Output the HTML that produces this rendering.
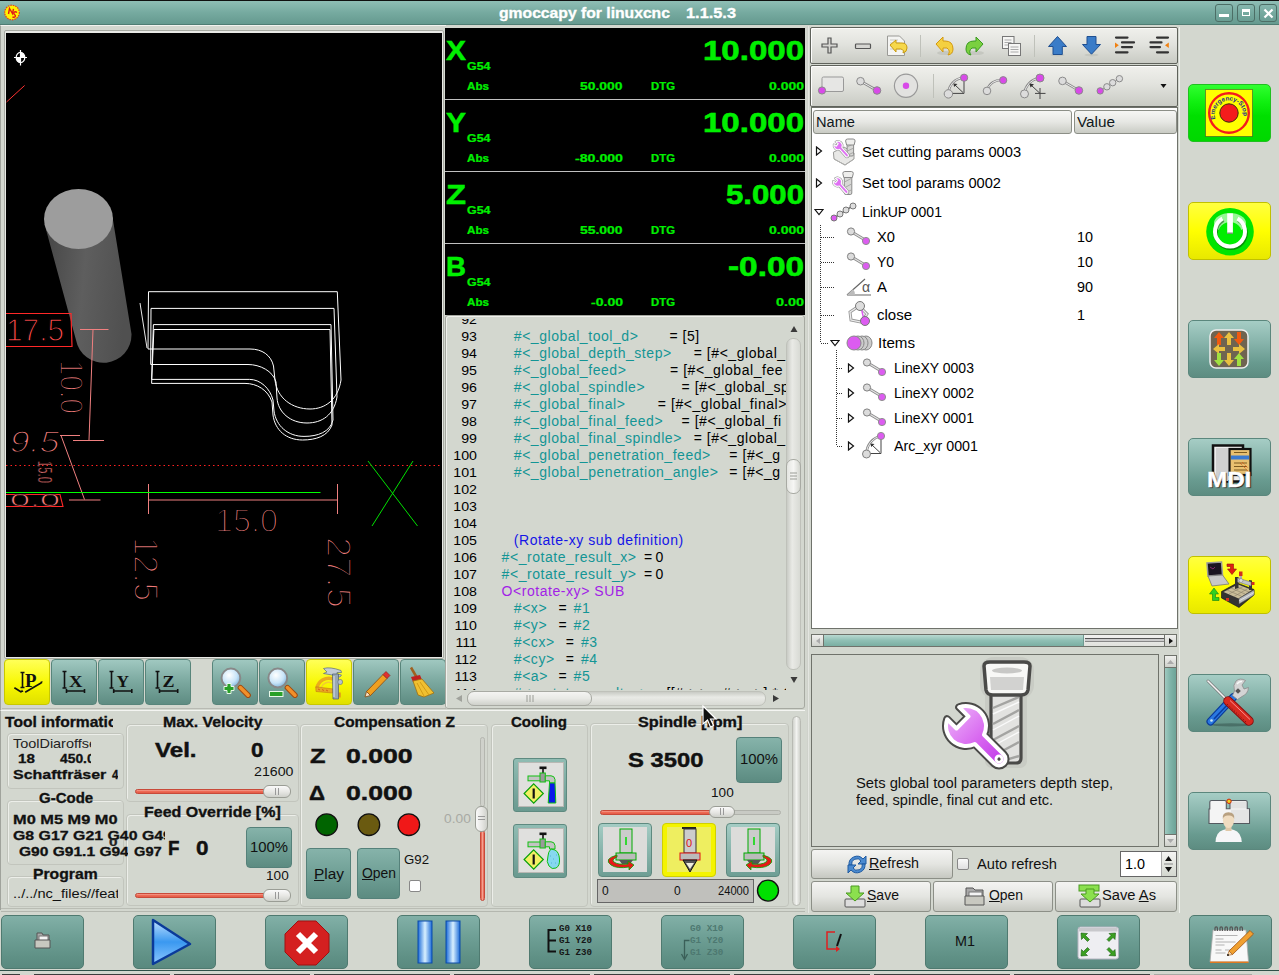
<!DOCTYPE html>
<html><head><meta charset="utf-8"><style>*{box-sizing:border-box;margin:0;padding:0}
html,body{width:1279px;height:975px;overflow:hidden;background:#d3d7cf;font-family:"Liberation Sans",sans-serif;color:#000;position:relative}
.a{position:absolute}
.t{position:absolute;white-space:pre;line-height:1;transform-origin:0 0}
</style></head><body>
<div class="a" style="left:0px;top:0px;width:1279px;height:1px;background:#101010"></div>
<div class="a" style="left:0px;top:1px;width:1279px;height:24px;background:linear-gradient(#8fbeb5,#76aaa0 50%,#659a8f);border-bottom:1px solid #4f7d73"></div>
<div class="t" id="t0" style="left:499.0px;top:6.1px;font-size:14px;font-weight:700;color:#fff;transform:scaleX(1.121);-webkit-text-stroke:0.31px #fff;">gmoccapy for linuxcnc</div>
<div class="t" id="t1" style="left:686.0px;top:6.1px;font-size:14px;font-weight:700;color:#fff;transform:scaleX(1.167);-webkit-text-stroke:0.31px #fff;">1.1.5.3</div>
<svg class="a" style="left:4px;top:4px;" width="17" height="17" viewBox="0 0 17 17"><circle cx="8" cy="8.5" r="7.3" fill="#fff200" stroke="#e8401a" stroke-width="1.2" stroke-dasharray="1.5 1"/><path d="M4.5,10 L5.5,4.5 L8.5,9.5 L9.5,4.8" stroke="#e01818" stroke-width="1.4" fill="none"/><path d="M13,8.5 C11,7 8.5,8.5 10.5,10.5 C12.5,12 11,14 8.5,13" stroke="#e01818" stroke-width="1.4" fill="none"/></svg>
<div class="a" style="left:1215px;top:4px;width:18px;height:18px;border:1px solid #4c6e66;border-radius:3px;"></div>
<div class="a" style="left:1237px;top:4px;width:18px;height:18px;border:1px solid #4c6e66;border-radius:3px;"></div>
<div class="a" style="left:1259px;top:4px;width:18px;height:18px;border:1px solid #4c6e66;border-radius:3px;"></div>
<div class="a" style="left:1219px;top:14px;width:10px;height:3px;background:#fff"></div>
<div class="a" style="left:1242px;top:9px;width:8px;height:7px;border:1px solid #fff;border-top:3px solid #fff"></div>
<svg class="a" style="left:1263px;top:8px;" width="11" height="11" viewBox="0 0 11 11"><path d="M1.5,1.5 L9.5,9.5 M9.5,1.5 L1.5,9.5" stroke="#fff" stroke-width="2.2"/></svg>
<div class="a" style="left:0px;top:25px;width:446px;height:685px;border-left:1px solid #a0a39c;border-top:1px solid #f2f3ef"></div>
<div class="a" style="left:4px;top:30px;width:440px;height:629px;border:1px solid #a8aba3;border-radius:2px;background:#e8e9e5"></div>
<div class="a" style="left:6px;top:33px;width:436px;height:624px;background:#000"></div>
<svg class="a" style="left:0px;top:0px;clip-path:inset(33px 0 0 6px)" width="442" height="657" viewBox="0 0 442 657">
<g fill="none" stroke-width="1">
<path d="M6.5,102 L24.6,85.5" stroke="#ff3030"/>
<ellipse cx="20.5" cy="57.5" rx="4.3" ry="5.2" stroke="#fff" stroke-width="1.2"/>
<path d="M14,57.5 H27 M20.5,50 V65.5" stroke="#fff" stroke-width="1.2"/>
<path d="M20.5,57.5 V52.3 A4.3,5.2 0 0 1 24.8,57.5 Z" fill="#fff" stroke="none"/>
<path d="M20.5,57.5 V62.7 A4.3,5.2 0 0 1 16.2,57.5 Z" fill="#fff" stroke="none"/>
</g>
<defs><linearGradient id="cyl" x1="0" y1="0" x2="1" y2="0.15"><stop offset="0" stop-color="#454545"/><stop offset="0.5" stop-color="#5e5e5e"/><stop offset="1" stop-color="#505050"/></linearGradient></defs>
<path d="M44.5,224 L76,340 A28,28 0 0 0 131.5,334 L112.5,217 Z" fill="url(#cyl)"/>
<ellipse cx="78.5" cy="219" rx="34.5" ry="30" fill="#9d9d9d"/>
<g fill="none" stroke="#ffffff" stroke-width="1">
<path d="M148.5,291.7 L337.3,291.7 L341,380 C338,400 325,409 310,409 C292,409 277,398 275,380 L273.5,366 C271,355 262,349 250,349 L148,349 Z"/>
<path d="M151,308.4 L334,308.4 L337,397 C334,415 322,423 307,423 C290,423 278,412 277,398 L276,382 C273,371 260,364.5 248,364.5 L150.7,364.5 Z"/>
<path d="M153.4,324.6 L331,324.6 L333,420 C330,432 318,436.4 304,436.4 C288,436.4 276,426 274,411 L273,400 C270,388 260,379.4 249.6,379.4 L151.6,379.4 Z"/>
<path d="M153.9,329.5 L330,329.5 L332,425 C328,436 316,440 302.6,440 C286,440 275,430 273,415 L272,402 C268,390 257,383.4 245,383.4 L151.6,383.4 Z"/>
</g>
<path d="M140,303 L147,348" stroke="#e8e8e8" stroke-width="1"/>
<g fill="none" stroke="#f08080" stroke-width="1">
<path d="M93,329.5 L89,440 M80,329.5 H108.5 M73,440.5 H104 M60,435.5 H80 M61,435.5 L84.5,499.5 M69,500 H100.5"/>
<path d="M148.5,484 V514 M337.5,484 V514 M148.5,500 H337.5"/>
</g>
<path d="M6,465.5 H442" stroke="#ff2020" stroke-width="1" stroke-dasharray="1.5 3"/>
<path d="M6,492.5 H320.5" stroke="#00ff00" stroke-width="1"/>
<path d="M368,461 L417.5,526 M413,461 L372,526" stroke="#00e000" stroke-width="1"/>
<path d="M6,313.5 H71 L72,346.5 H6" fill="none" stroke="#ff2828" stroke-width="1.2"/>
<path d="M6,494.5 H60 L63,506.5 H6" fill="none" stroke="#ff2828" stroke-width="1.1"/>
<g font-family="Liberation Sans" fill="#ff4a4a" stroke="#000" stroke-width="1.3" paint-order="normal">
<text x="6" y="341" font-size="31" textLength="58" lengthAdjust="spacingAndGlyphs">17.5</text>
</g>
<g font-family="Liberation Sans" fill="#f07a78" stroke="#000" stroke-width="1.9">
<text transform="translate(6,452) skewX(-12)" x="2" y="0" font-size="30" stroke-width="1.5" textLength="50" lengthAdjust="spacingAndGlyphs">9.5</text>
<text x="215" y="531.5" font-size="33" textLength="63" lengthAdjust="spacingAndGlyphs">15.0</text>
<text transform="translate(59.5,360) rotate(90)" x="0" y="0" font-size="34" textLength="54" lengthAdjust="spacingAndGlyphs">10.0</text>
<text transform="translate(134,537) rotate(90)" x="0" y="0" font-size="35" textLength="64" lengthAdjust="spacingAndGlyphs">12.5</text>
<text transform="translate(327,537) rotate(90)" x="0" y="0" font-size="35" textLength="71" lengthAdjust="spacingAndGlyphs">27.5</text>
<text transform="translate(38,461) rotate(90)" x="0" y="0" font-size="20" stroke-width="0.6" textLength="22" lengthAdjust="spacingAndGlyphs">15.0</text>
<text x="10" y="506" font-size="16" stroke-width="0.5" textLength="50" lengthAdjust="spacingAndGlyphs">0.0</text>
</g>
</svg>
<div class="a" style="left:4px;top:659px;width:46px;height:46px;background:linear-gradient(#ffff58,#f8f800 55%,#e0e000);border:1px solid #c8c800;border-radius:4px;"></div>
<div class="a" style="left:51px;top:659px;width:46px;height:46px;background:linear-gradient(#a0c8c0,#7eaba2 45%,#5e8c82);border:1px solid #58857b;border-radius:4px;"></div>
<div class="a" style="left:98px;top:659px;width:46px;height:46px;background:linear-gradient(#a0c8c0,#7eaba2 45%,#5e8c82);border:1px solid #58857b;border-radius:4px;"></div>
<div class="a" style="left:145px;top:659px;width:46px;height:46px;background:linear-gradient(#a0c8c0,#7eaba2 45%,#5e8c82);border:1px solid #58857b;border-radius:4px;"></div>
<div class="a" style="left:212px;top:659px;width:46px;height:46px;background:linear-gradient(#a0c8c0,#7eaba2 45%,#5e8c82);border:1px solid #58857b;border-radius:4px;"></div>
<div class="a" style="left:259px;top:659px;width:46px;height:46px;background:linear-gradient(#a0c8c0,#7eaba2 45%,#5e8c82);border:1px solid #58857b;border-radius:4px;"></div>
<div class="a" style="left:306px;top:659px;width:46px;height:46px;background:linear-gradient(#ffff58,#f8f800 55%,#e0e000);border:1px solid #c8c800;border-radius:4px;"></div>
<div class="a" style="left:353px;top:659px;width:46px;height:46px;background:linear-gradient(#a0c8c0,#7eaba2 45%,#5e8c82);border:1px solid #58857b;border-radius:4px;"></div>
<div class="a" style="left:400px;top:659px;width:46px;height:46px;background:linear-gradient(#a0c8c0,#7eaba2 45%,#5e8c82);border:1px solid #58857b;border-radius:4px;"></div>
<div class="a" style="left:2px;top:708px;width:444px;height:1px;background:#b8bab3"></div>
<div class="a" style="left:445px;top:28px;width:360px;height:287px;background:#000"></div>
<div class="a" style="left:445px;top:99px;width:360px;height:1px;background:#c0c0c0"></div>
<div class="a" style="left:445px;top:171px;width:360px;height:1px;background:#c0c0c0"></div>
<div class="a" style="left:445px;top:243px;width:360px;height:1px;background:#c0c0c0"></div>
<div class="t" id="t2" style="left:446.0px;top:35.9px;font-size:28.5px;font-weight:700;color:#00f000;transform:scaleX(1.052);-webkit-text-stroke:0.5px #00f000;">X</div>
<div class="t" id="t3" style="left:466.5px;top:61.0px;font-size:11px;font-weight:700;color:#00f000;transform:scaleX(1.130);-webkit-text-stroke:0.24px #00f000;">G54</div>
<div class="t" id="t4" style="left:467.0px;top:80.7px;font-size:11px;font-weight:700;color:#00f000;transform:scaleX(1.059);-webkit-text-stroke:0.24px #00f000;">Abs</div>
<div class="t" id="t5" style="left:702.5px;top:36.2px;font-size:28.5px;font-weight:700;color:#00f000;transform:scaleX(1.159);-webkit-text-stroke:0.6px #00f000;">10.000</div>
<div class="t" id="t6" style="left:580.0px;top:80.7px;font-size:11px;font-weight:700;color:#00f000;transform:scaleX(1.263);-webkit-text-stroke:0.24px #00f000;">50.000</div>
<div class="t" id="t7" style="left:650.5px;top:80.7px;font-size:11px;font-weight:700;color:#00f000;transform:scaleX(1.033);-webkit-text-stroke:0.24px #00f000;">DTG</div>
<div class="t" id="t8" style="left:768.5px;top:80.7px;font-size:11px;font-weight:700;color:#00f000;transform:scaleX(1.271);-webkit-text-stroke:0.24px #00f000;">0.000</div>
<div class="t" id="t9" style="left:446.0px;top:107.9px;font-size:28.5px;font-weight:700;color:#00f000;transform:scaleX(1.052);-webkit-text-stroke:0.5px #00f000;">Y</div>
<div class="t" id="t10" style="left:466.5px;top:133.0px;font-size:11px;font-weight:700;color:#00f000;transform:scaleX(1.130);-webkit-text-stroke:0.24px #00f000;">G54</div>
<div class="t" id="t11" style="left:467.0px;top:152.7px;font-size:11px;font-weight:700;color:#00f000;transform:scaleX(1.059);-webkit-text-stroke:0.24px #00f000;">Abs</div>
<div class="t" id="t12" style="left:702.5px;top:108.2px;font-size:28.5px;font-weight:700;color:#00f000;transform:scaleX(1.159);-webkit-text-stroke:0.6px #00f000;">10.000</div>
<div class="t" id="t13" style="left:574.5px;top:152.7px;font-size:11px;font-weight:700;color:#00f000;transform:scaleX(1.286);-webkit-text-stroke:0.24px #00f000;">-80.000</div>
<div class="t" id="t14" style="left:650.5px;top:152.7px;font-size:11px;font-weight:700;color:#00f000;transform:scaleX(1.033);-webkit-text-stroke:0.24px #00f000;">DTG</div>
<div class="t" id="t15" style="left:768.5px;top:152.7px;font-size:11px;font-weight:700;color:#00f000;transform:scaleX(1.271);-webkit-text-stroke:0.24px #00f000;">0.000</div>
<div class="t" id="t16" style="left:446.0px;top:179.9px;font-size:28.5px;font-weight:700;color:#00f000;transform:scaleX(1.148);-webkit-text-stroke:0.5px #00f000;">Z</div>
<div class="t" id="t17" style="left:466.5px;top:205.0px;font-size:11px;font-weight:700;color:#00f000;transform:scaleX(1.130);-webkit-text-stroke:0.24px #00f000;">G54</div>
<div class="t" id="t18" style="left:467.0px;top:224.7px;font-size:11px;font-weight:700;color:#00f000;transform:scaleX(1.059);-webkit-text-stroke:0.24px #00f000;">Abs</div>
<div class="t" id="t19" style="left:725.5px;top:180.2px;font-size:28.5px;font-weight:700;color:#00f000;transform:scaleX(1.094);-webkit-text-stroke:0.6px #00f000;">5.000</div>
<div class="t" id="t20" style="left:580.0px;top:224.7px;font-size:11px;font-weight:700;color:#00f000;transform:scaleX(1.263);-webkit-text-stroke:0.24px #00f000;">55.000</div>
<div class="t" id="t21" style="left:650.5px;top:224.7px;font-size:11px;font-weight:700;color:#00f000;transform:scaleX(1.033);-webkit-text-stroke:0.24px #00f000;">DTG</div>
<div class="t" id="t22" style="left:768.5px;top:224.7px;font-size:11px;font-weight:700;color:#00f000;transform:scaleX(1.271);-webkit-text-stroke:0.24px #00f000;">0.000</div>
<div class="t" id="t23" style="left:446.0px;top:251.9px;font-size:28.5px;font-weight:700;color:#00f000;transform:scaleX(0.971);-webkit-text-stroke:0.5px #00f000;">B</div>
<div class="t" id="t24" style="left:466.5px;top:277.0px;font-size:11px;font-weight:700;color:#00f000;transform:scaleX(1.130);-webkit-text-stroke:0.24px #00f000;">G54</div>
<div class="t" id="t25" style="left:467.0px;top:296.7px;font-size:11px;font-weight:700;color:#00f000;transform:scaleX(1.059);-webkit-text-stroke:0.24px #00f000;">Abs</div>
<div class="t" id="t26" style="left:727.5px;top:252.2px;font-size:28.5px;font-weight:700;color:#00f000;transform:scaleX(1.170);-webkit-text-stroke:0.6px #00f000;">-0.00</div>
<div class="t" id="t27" style="left:590.5px;top:296.7px;font-size:11px;font-weight:700;color:#00f000;transform:scaleX(1.276);-webkit-text-stroke:0.24px #00f000;">-0.00</div>
<div class="t" id="t28" style="left:650.5px;top:296.7px;font-size:11px;font-weight:700;color:#00f000;transform:scaleX(1.033);-webkit-text-stroke:0.24px #00f000;">DTG</div>
<div class="t" id="t29" style="left:775.5px;top:296.7px;font-size:11px;font-weight:700;color:#00f000;transform:scaleX(1.307);-webkit-text-stroke:0.24px #00f000;">0.00</div>
<div class="a" style="left:445px;top:315px;width:360px;height:394px;border:1px solid #a6a9a1;border-radius:3px;background:#d3d7cf;box-shadow:inset 1px 1px 0 #f0f1ed"></div>
<div class="a" style="left:445px;top:319px;width:341px;height:371px;overflow:hidden"><div class="a" style="left:0;top:-4px;width:341px;height:400px"><div class="t" style="left:32.0px;top:-2.4px;font-size:13.5px;transform:translateX(-100%) scaleX(1.05);transform-origin:100% 0">92</div>
<div class="t" style="left:32.0px;top:14.6px;font-size:13.5px;transform:translateX(-100%) scaleX(1.05);transform-origin:100% 0">93</div>
<div class="t" style="left:68.8px;top:14.1px;font-size:14px;letter-spacing:0.55px"><span style="color:#139595">#&lt;_global_tool_d&gt;</span></div>
<div class="t" style="left:224.4px;top:14.1px;font-size:14px;letter-spacing:0.55px"><span style="color:#000">= [5]</span></div>
<div class="t" style="left:32.0px;top:31.6px;font-size:13.5px;transform:translateX(-100%) scaleX(1.05);transform-origin:100% 0">94</div>
<div class="t" style="left:68.8px;top:31.1px;font-size:14px;letter-spacing:0.55px"><span style="color:#139595">#&lt;_global_depth_step&gt;</span></div>
<div class="t" style="left:248.7px;top:31.1px;font-size:14px;letter-spacing:0.55px"><span style="color:#000">= [#&lt;_global_</span></div>
<div class="t" style="left:32.0px;top:48.6px;font-size:13.5px;transform:translateX(-100%) scaleX(1.05);transform-origin:100% 0">95</div>
<div class="t" style="left:68.8px;top:48.1px;font-size:14px;letter-spacing:0.55px"><span style="color:#139595">#&lt;_global_feed&gt;</span></div>
<div class="t" style="left:225.0px;top:48.1px;font-size:14px;letter-spacing:0.55px"><span style="color:#000">= [#&lt;_global_fee</span></div>
<div class="t" style="left:32.0px;top:65.6px;font-size:13.5px;transform:translateX(-100%) scaleX(1.05);transform-origin:100% 0">96</div>
<div class="t" style="left:68.8px;top:65.1px;font-size:14px;letter-spacing:0.55px"><span style="color:#139595">#&lt;_global_spindle&gt;</span></div>
<div class="t" style="left:236.5px;top:65.1px;font-size:14px;letter-spacing:0.55px"><span style="color:#000">= [#&lt;_global_sp</span></div>
<div class="t" style="left:32.0px;top:82.6px;font-size:13.5px;transform:translateX(-100%) scaleX(1.05);transform-origin:100% 0">97</div>
<div class="t" style="left:68.8px;top:82.1px;font-size:14px;letter-spacing:0.55px"><span style="color:#139595">#&lt;_global_final&gt;</span></div>
<div class="t" style="left:212.8px;top:82.1px;font-size:14px;letter-spacing:0.55px"><span style="color:#000">= [#&lt;_global_final&gt;</span></div>
<div class="t" style="left:32.0px;top:99.6px;font-size:13.5px;transform:translateX(-100%) scaleX(1.05);transform-origin:100% 0">98</div>
<div class="t" style="left:68.8px;top:99.1px;font-size:14px;letter-spacing:0.55px"><span style="color:#139595">#&lt;_global_final_feed&gt;</span></div>
<div class="t" style="left:236.5px;top:99.1px;font-size:14px;letter-spacing:0.55px"><span style="color:#000">= [#&lt;_global_fi</span></div>
<div class="t" style="left:32.0px;top:116.6px;font-size:13.5px;transform:translateX(-100%) scaleX(1.05);transform-origin:100% 0">99</div>
<div class="t" style="left:68.8px;top:116.1px;font-size:14px;letter-spacing:0.55px"><span style="color:#139595">#&lt;_global_final_spindle&gt;</span></div>
<div class="t" style="left:248.7px;top:116.1px;font-size:14px;letter-spacing:0.55px"><span style="color:#000">= [#&lt;_global_</span></div>
<div class="t" style="left:32.0px;top:133.6px;font-size:13.5px;transform:translateX(-100%) scaleX(1.05);transform-origin:100% 0">100</div>
<div class="t" style="left:68.8px;top:133.1px;font-size:14px;letter-spacing:0.55px"><span style="color:#139595">#&lt;_global_penetration_feed&gt;</span></div>
<div class="t" style="left:284.3px;top:133.1px;font-size:14px;letter-spacing:0.55px"><span style="color:#000">= [#&lt;_g</span></div>
<div class="t" style="left:32.0px;top:150.6px;font-size:13.5px;transform:translateX(-100%) scaleX(1.05);transform-origin:100% 0">101</div>
<div class="t" style="left:68.8px;top:150.1px;font-size:14px;letter-spacing:0.55px"><span style="color:#139595">#&lt;_global_penetration_angle&gt;</span></div>
<div class="t" style="left:284.3px;top:150.1px;font-size:14px;letter-spacing:0.55px"><span style="color:#000">= [#&lt;_g</span></div>
<div class="t" style="left:32.0px;top:167.6px;font-size:13.5px;transform:translateX(-100%) scaleX(1.05);transform-origin:100% 0">102</div>
<div class="t" style="left:32.0px;top:184.6px;font-size:13.5px;transform:translateX(-100%) scaleX(1.05);transform-origin:100% 0">103</div>
<div class="t" style="left:32.0px;top:201.6px;font-size:13.5px;transform:translateX(-100%) scaleX(1.05);transform-origin:100% 0">104</div>
<div class="t" style="left:32.0px;top:218.6px;font-size:13.5px;transform:translateX(-100%) scaleX(1.05);transform-origin:100% 0">105</div>
<div class="t" style="left:68.8px;top:218.1px;font-size:14px;letter-spacing:0.55px"><span style="color:#1515e6">(Rotate-xy sub definition)</span></div>
<div class="t" style="left:32.0px;top:235.6px;font-size:13.5px;transform:translateX(-100%) scaleX(1.05);transform-origin:100% 0">106</div>
<div class="t" style="left:56.6px;top:235.1px;font-size:14px;letter-spacing:0.55px"><span style="color:#139595">#&lt;_rotate_result_x&gt;</span></div>
<div class="t" style="left:199.0px;top:235.1px;font-size:14px;letter-spacing:0.55px"><span style="color:#000">=</span></div>
<div class="t" style="left:210.5px;top:235.1px;font-size:14px;letter-spacing:0.55px"><span style="color:#000">0</span></div>
<div class="t" style="left:32.0px;top:252.6px;font-size:13.5px;transform:translateX(-100%) scaleX(1.05);transform-origin:100% 0">107</div>
<div class="t" style="left:56.6px;top:252.1px;font-size:14px;letter-spacing:0.55px"><span style="color:#139595">#&lt;_rotate_result_y&gt;</span></div>
<div class="t" style="left:199.0px;top:252.1px;font-size:14px;letter-spacing:0.55px"><span style="color:#000">=</span></div>
<div class="t" style="left:210.5px;top:252.1px;font-size:14px;letter-spacing:0.55px"><span style="color:#000">0</span></div>
<div class="t" style="left:32.0px;top:269.6px;font-size:13.5px;transform:translateX(-100%) scaleX(1.05);transform-origin:100% 0">108</div>
<div class="t" style="left:56.6px;top:269.1px;font-size:14px;letter-spacing:0.55px"><span style="color:#a21fe6">O&lt;rotate-xy&gt; SUB</span></div>
<div class="t" style="left:32.0px;top:286.6px;font-size:13.5px;transform:translateX(-100%) scaleX(1.05);transform-origin:100% 0">109</div>
<div class="t" style="left:68.8px;top:286.1px;font-size:14px;letter-spacing:0.55px"><span style="color:#139595">#&lt;x&gt;</span></div>
<div class="t" style="left:113.6px;top:286.1px;font-size:14px;letter-spacing:0.55px"><span style="color:#000">=</span></div>
<div class="t" style="left:128.6px;top:286.1px;font-size:14px;letter-spacing:0.55px"><span style="color:#139595">#1</span></div>
<div class="t" style="left:32.0px;top:303.6px;font-size:13.5px;transform:translateX(-100%) scaleX(1.05);transform-origin:100% 0">110</div>
<div class="t" style="left:68.8px;top:303.1px;font-size:14px;letter-spacing:0.55px"><span style="color:#139595">#&lt;y&gt;</span></div>
<div class="t" style="left:113.6px;top:303.1px;font-size:14px;letter-spacing:0.55px"><span style="color:#000">=</span></div>
<div class="t" style="left:128.6px;top:303.1px;font-size:14px;letter-spacing:0.55px"><span style="color:#139595">#2</span></div>
<div class="t" style="left:32.0px;top:320.6px;font-size:13.5px;transform:translateX(-100%) scaleX(1.05);transform-origin:100% 0">111</div>
<div class="t" style="left:68.8px;top:320.1px;font-size:14px;letter-spacing:0.55px"><span style="color:#139595">#&lt;cx&gt;</span></div>
<div class="t" style="left:120.8px;top:320.1px;font-size:14px;letter-spacing:0.55px"><span style="color:#000">=</span></div>
<div class="t" style="left:135.9px;top:320.1px;font-size:14px;letter-spacing:0.55px"><span style="color:#139595">#3</span></div>
<div class="t" style="left:32.0px;top:337.6px;font-size:13.5px;transform:translateX(-100%) scaleX(1.05);transform-origin:100% 0">112</div>
<div class="t" style="left:68.8px;top:337.1px;font-size:14px;letter-spacing:0.55px"><span style="color:#139595">#&lt;cy&gt;</span></div>
<div class="t" style="left:120.8px;top:337.1px;font-size:14px;letter-spacing:0.55px"><span style="color:#000">=</span></div>
<div class="t" style="left:135.9px;top:337.1px;font-size:14px;letter-spacing:0.55px"><span style="color:#139595">#4</span></div>
<div class="t" style="left:32.0px;top:354.6px;font-size:13.5px;transform:translateX(-100%) scaleX(1.05);transform-origin:100% 0">113</div>
<div class="t" style="left:68.8px;top:354.1px;font-size:14px;letter-spacing:0.55px"><span style="color:#139595">#&lt;a&gt;</span></div>
<div class="t" style="left:113.6px;top:354.1px;font-size:14px;letter-spacing:0.55px"><span style="color:#000">=</span></div>
<div class="t" style="left:128.6px;top:354.1px;font-size:14px;letter-spacing:0.55px"><span style="color:#139595">#5</span></div>
<div class="t" style="left:32.0px;top:371.6px;font-size:13.5px;transform:translateX(-100%) scaleX(1.05);transform-origin:100% 0">114</div>
<div class="t" style="left:68.8px;top:371.1px;font-size:14px;letter-spacing:0.55px"><span style="color:#139595">#&lt;_rotate_result_x&gt;</span><span style="color:#000"> = [[#&lt;x&gt; - #&lt;cx&gt;] * COS[#&lt;a&gt;]</span></div></div></div>
<div class="a" style="left:786px;top:338px;width:15px;height:332px;background:linear-gradient(90deg,#c9cbc5,#e9eae6 40%,#d8dad4);border:1px solid #bfc1ba;border-radius:7px"></div>
<div class="a" style="left:786px;top:459px;width:15px;height:35px;background:linear-gradient(90deg,#e4e5e1,#f6f6f4 50%,#d4d6d0);border:1px solid #a8aaa3;border-radius:7px"></div>
<svg class="a" style="left:790px;top:325px;" width="8" height="8" viewBox="0 0 8 8"><path d="M0.5,7 L4,1 L7.5,7 Z" fill="#3a3a3a"/></svg>
<svg class="a" style="left:790px;top:676px;" width="8" height="8" viewBox="0 0 8 8"><path d="M0.5,1 L4,7 L7.5,1 Z" fill="#3a3a3a"/></svg>
<svg class="a" style="left:789px;top:471px;" width="9" height="10" viewBox="0 0 9 10"><path d="M1,2 H8 M1,5 H8 M1,8 H8" stroke="#9a9c96" stroke-width="1"/></svg>
<div class="a" style="left:467px;top:691px;width:299px;height:15px;background:linear-gradient(#c9cbc5,#e9eae6 40%,#d8dad4);border:1px solid #bfc1ba;border-radius:7px"></div>
<div class="a" style="left:467px;top:691px;width:125px;height:15px;background:linear-gradient(#f4f4f2,#e8e9e5 50%,#cfd1cb);border:1px solid #a8aaa3;border-radius:7px"></div>
<svg class="a" style="left:455px;top:694px;" width="8" height="9" viewBox="0 0 8 9"><path d="M7,1 L1,4.5 L7,8 Z" fill="#a0a29c"/></svg>
<svg class="a" style="left:772px;top:694px;" width="8" height="9" viewBox="0 0 8 9"><path d="M1,1 L7,4.5 L1,8 Z" fill="#3a3a3a"/></svg>
<svg class="a" style="left:525px;top:694px;" width="10" height="9" viewBox="0 0 10 9"><path d="M2,1 V8 M5,1 V8 M8,1 V8" stroke="#9a9c96" stroke-width="1"/></svg>
<div class="a" style="left:807px;top:26px;width:2px;height:887px;background:linear-gradient(90deg,#c4c7bf,#eef0ec)"></div>
<div class="a" style="left:810px;top:27px;width:368px;height:37px;background:linear-gradient(#f0f0ec,#e2e3de 45%,#c9cbc4);border:1px solid #5f625b;border-radius:2px;box-shadow:inset 1px 1px 0 #fdfdfc;"></div>
<div class="a" style="left:810px;top:65px;width:368px;height:42px;background:linear-gradient(#f0f0ec,#e2e3de 45%,#c9cbc4);border:1px solid #5f625b;border-radius:2px;box-shadow:inset 1px 1px 0 #fdfdfc;"></div>
<div class="a" style="left:811px;top:107px;width:367px;height:522px;background:#fff;border:1px solid #6f726b"></div>
<div class="a" style="left:1179px;top:27px;width:1px;height:886px;background:#eef0ec"></div>
<div class="a" style="left:813px;top:110px;width:259px;height:24px;background:linear-gradient(#f6f6f4,#e6e7e3 50%,#c9cbc4);border:1px solid #8c8f87;border-radius:3px;"></div>
<div class="a" style="left:1074px;top:110px;width:103px;height:24px;background:linear-gradient(#f6f6f4,#e6e7e3 50%,#c9cbc4);border:1px solid #8c8f87;border-radius:3px;"></div>
<div class="t" id="t30" style="left:816.0px;top:115.1px;font-size:14px;font-weight:400;color:#101820;transform:scaleX(1.044);">Name</div>
<div class="t" id="t31" style="left:1077.0px;top:115.1px;font-size:14px;font-weight:400;color:#101820;transform:scaleX(1.093);">Value</div>
<svg class="a" style="left:815px;top:146px;" width="8" height="10" viewBox="0 0 8 10"><path d="M1.5,1 L6.5,5 L1.5,9 Z" fill="none" stroke="#111" stroke-width="1.2"/></svg>
<svg class="a" style="left:815px;top:178px;" width="8" height="10" viewBox="0 0 8 10"><path d="M1.5,1 L6.5,5 L1.5,9 Z" fill="none" stroke="#111" stroke-width="1.2"/></svg>
<svg class="a" style="left:814px;top:208px;" width="10" height="8" viewBox="0 0 10 8"><path d="M1,1.5 L9,1.5 L5,6.5 Z" fill="none" stroke="#111" stroke-width="1.2"/></svg>
<svg class="a" style="left:810px;top:132px;" width="50" height="70" viewBox="0 0 50 70"><path d="M23.4,20.2 L34,15 L44,21 L44,27 L35,33 L24,27 Z" fill="#e8e8e6" stroke="#9a9a98" stroke-width="1"/><path d="M24,27 L35,33 L44,27" fill="none" stroke="#b0b0ae"/><rect x="37.1" y="11" width="6.5" height="13" rx="1.5" fill="#d8d8d6" stroke="#8a8a8a" stroke-width="1"/><path d="M37.6,14.65 L43.1,12.1 M37.6,18.9 L43.1,16.35 M37.6,23.15 L43.1,20.6" stroke="#a8a8a6" stroke-width="1"/><path d="M35.6,9 Q35.6,7 37.6,7 L43.1,7 Q45.1,7 45.1,9 L44.1,13 L36.6,13 Z" fill="#eeeeec" stroke="#8a8a8a" stroke-width="1"/><g transform="translate(28,13.5) rotate(-42) scale(0.25)"><path d="M2.85,-16.67 A17,17 0 0 1 6,15.91 L6,53.7 A6,6 0 0 1 -6,53.7 L-6,15.91 A17,17 0 0 1 -9.76,-13.81 L-7.19,-2.45 L5.43,-5.31 Z" fill="none" stroke="#8a8a8a" stroke-width="8.8" stroke-linejoin="round"/><path d="M2.85,-16.67 A17,17 0 0 1 6,15.91 L6,53.7 A6,6 0 0 1 -6,53.7 L-6,15.91 A17,17 0 0 1 -9.76,-13.81 L-7.19,-2.45 L5.43,-5.31 Z" fill="#e070f4" stroke="#fafafa" stroke-width="4.8" stroke-linejoin="round"/></g><rect x="34.3" y="43.5" width="7.5" height="19" rx="1.5" fill="#d8d8d6" stroke="#8a8a8a" stroke-width="1"/><path d="M34.8,49.85 L41.3,46.4 M34.8,55.599999999999994 L41.3,52.15 M34.8,61.349999999999994 L41.3,57.900000000000006" stroke="#a8a8a6" stroke-width="1"/><path d="M32.8,41.5 Q32.8,39.5 34.8,39.5 L41.3,39.5 Q43.3,39.5 43.3,41.5 L42.3,45.5 L33.8,45.5 Z" fill="#eeeeec" stroke="#8a8a8a" stroke-width="1"/><g transform="translate(27.5,50) rotate(-42) scale(0.25)"><path d="M2.85,-16.67 A17,17 0 0 1 6,15.91 L6,53.7 A6,6 0 0 1 -6,53.7 L-6,15.91 A17,17 0 0 1 -9.76,-13.81 L-7.19,-2.45 L5.43,-5.31 Z" fill="none" stroke="#8a8a8a" stroke-width="8.8" stroke-linejoin="round"/><path d="M2.85,-16.67 A17,17 0 0 1 6,15.91 L6,53.7 A6,6 0 0 1 -6,53.7 L-6,15.91 A17,17 0 0 1 -9.76,-13.81 L-7.19,-2.45 L5.43,-5.31 Z" fill="#e070f4" stroke="#fafafa" stroke-width="4.8" stroke-linejoin="round"/></g></svg>
<svg class="a" style="left:829px;top:201px;" width="30" height="22" viewBox="0 0 30 22"><path d="M5,17 L25,4" stroke="#777" stroke-width="1.5"/><circle cx="5" cy="17" r="3" fill="#dc5cf0" stroke="#777"/><circle cx="11" cy="13" r="3" fill="#ddd" stroke="#777"/><circle cx="17" cy="9" r="3" fill="#ddd" stroke="#777"/><circle cx="24" cy="5" r="3" fill="#ddd" stroke="#777"/></svg>
<div class="t" id="t32" style="left:862.0px;top:145.1px;font-size:14px;font-weight:400;color:#000;transform:scaleX(1.048);">Set cutting params 0003</div>
<div class="t" id="t33" style="left:862.0px;top:176.1px;font-size:14px;font-weight:400;color:#000;transform:scaleX(1.044);">Set tool params 0002</div>
<div class="t" id="t34" style="left:862.0px;top:205.1px;font-size:14px;font-weight:400;color:#000;">LinkUP 0001</div>
<svg class="a" style="left:815px;top:220px;" width="80" height="235" viewBox="0 0 80 235"><g stroke="#333" stroke-width="1" stroke-dasharray="1 1" fill="none"><path d="M5.5,5 V123"/><path d="M6,123.5 H14 M6,17.5 H20 M6,42.5 H20 M6,67.5 H20 M6,95.5 H20"/><path d="M21.5,130 V226"/><path d="M22,226.5 H28 M22,148.5 H28 M22,173.5 H28 M22,198.5 H28"/></g></svg>
<svg class="a" style="left:845px;top:226px;" width="28" height="20" viewBox="0 0 28 20"><path d="M6,5.5 L21,14.5" stroke="#8a8a8a" stroke-width="2.8"/><path d="M6,5.5 L21,14.5" stroke="#e4e4e4" stroke-width="1.2"/><circle cx="6" cy="5.5" r="3.6" fill="#dcdcdc" stroke="#808080" stroke-width="1"/><circle cx="21" cy="15" r="3.6" fill="#dc5cf0" stroke="#909090" stroke-width="1"/></svg>
<svg class="a" style="left:845px;top:251px;" width="28" height="20" viewBox="0 0 28 20"><path d="M6,5.5 L21,14.5" stroke="#8a8a8a" stroke-width="2.8"/><path d="M6,5.5 L21,14.5" stroke="#e4e4e4" stroke-width="1.2"/><circle cx="6" cy="5.5" r="3.6" fill="#dcdcdc" stroke="#808080" stroke-width="1"/><circle cx="21" cy="15" r="3.6" fill="#dc5cf0" stroke="#909090" stroke-width="1"/></svg>
<svg class="a" style="left:845px;top:275px;" width="30" height="22" viewBox="0 0 30 22"><path d="M2,20 L20,4 M2,20 H26" stroke="#666" stroke-width="1.2" fill="none"/><path d="M10,20 A9,9 0 0 0 8,14 L2,20 Z" fill="#bbb"/><text x="17" y="17" font-size="14" fill="#555" font-family="Liberation Sans">α</text></svg>
<svg class="a" style="left:845px;top:300px;" width="28" height="26" viewBox="0 0 28 26"><path d="M5,12 L14,6 L22,14 L16,22 L6,20 Z" fill="none" stroke="#999" stroke-width="3"/><path d="M5,12 L14,6 L22,14 L16,22 L6,20 Z" fill="none" stroke="#eee" stroke-width="1.2"/><path d="M16,7 L19,20" stroke="#dc5cf0" stroke-width="1.5"/><circle cx="15" cy="6" r="4.5" fill="#ddd" stroke="#777"/><circle cx="20" cy="21" r="4.5" fill="#dc5cf0" stroke="#777"/></svg>
<svg class="a" style="left:846px;top:332.5px;" width="28" height="20" viewBox="0 0 28 20"><ellipse cx="20" cy="10" rx="6" ry="7" fill="#ccc" stroke="#888"/><ellipse cx="16" cy="10" rx="6" ry="7" fill="#ccc" stroke="#888"/><ellipse cx="12" cy="10" rx="6" ry="7" fill="#ccc" stroke="#888"/><ellipse cx="8" cy="10" rx="7" ry="7" fill="#dc5cf0" stroke="#888"/></svg>
<div class="t" id="t35" style="left:877.0px;top:230.1px;font-size:14px;font-weight:400;color:#000;transform:scaleX(1.051);">X0</div>
<div class="t" id="t36" style="left:877.0px;top:255.1px;font-size:14px;font-weight:400;color:#000;transform:scaleX(0.993);">Y0</div>
<div class="t" id="t37" style="left:877.0px;top:280.1px;font-size:14px;font-weight:400;color:#000;transform:scaleX(1.070);">A</div>
<div class="t" id="t38" style="left:877.0px;top:308.1px;font-size:14px;font-weight:400;color:#000;transform:scaleX(1.071);">close</div>
<div class="t" id="t39" style="left:878.0px;top:336.1px;font-size:14px;font-weight:400;color:#000;transform:scaleX(1.081);">Items</div>
<div class="t" id="t40" style="left:1077.0px;top:230.1px;font-size:14px;font-weight:400;color:#000;transform:scaleX(1.027);">10</div>
<div class="t" id="t41" style="left:1077.0px;top:255.1px;font-size:14px;font-weight:400;color:#000;transform:scaleX(1.027);">10</div>
<div class="t" id="t42" style="left:1077.0px;top:280.1px;font-size:14px;font-weight:400;color:#000;transform:scaleX(1.027);">90</div>
<div class="t" id="t43" style="left:1077.0px;top:308.1px;font-size:14px;font-weight:400;color:#000;transform:scaleX(1.026);">1</div>
<svg class="a" style="left:830px;top:339px;" width="10" height="8" viewBox="0 0 10 8"><path d="M1,1.5 L9,1.5 L5,6.5 Z" fill="none" stroke="#111" stroke-width="1.2"/></svg>
<svg class="a" style="left:847px;top:363px;" width="8" height="10" viewBox="0 0 8 10"><path d="M1.5,1 L6.5,5 L1.5,9 Z" fill="none" stroke="#111" stroke-width="1.2"/></svg>
<svg class="a" style="left:861px;top:357px;" width="28" height="20" viewBox="0 0 28 20"><path d="M6,5.5 L21,14.5" stroke="#8a8a8a" stroke-width="2.8"/><path d="M6,5.5 L21,14.5" stroke="#e4e4e4" stroke-width="1.2"/><circle cx="6" cy="5.5" r="3.6" fill="#dcdcdc" stroke="#808080" stroke-width="1"/><circle cx="21" cy="15" r="3.6" fill="#dc5cf0" stroke="#909090" stroke-width="1"/></svg>
<div class="t" id="t44" style="left:894.0px;top:361.1px;font-size:14px;font-weight:400;color:#000;">LineXY 0003</div>
<svg class="a" style="left:847px;top:388px;" width="8" height="10" viewBox="0 0 8 10"><path d="M1.5,1 L6.5,5 L1.5,9 Z" fill="none" stroke="#111" stroke-width="1.2"/></svg>
<svg class="a" style="left:861px;top:382px;" width="28" height="20" viewBox="0 0 28 20"><path d="M6,5.5 L21,14.5" stroke="#8a8a8a" stroke-width="2.8"/><path d="M6,5.5 L21,14.5" stroke="#e4e4e4" stroke-width="1.2"/><circle cx="6" cy="5.5" r="3.6" fill="#dcdcdc" stroke="#808080" stroke-width="1"/><circle cx="21" cy="15" r="3.6" fill="#dc5cf0" stroke="#909090" stroke-width="1"/></svg>
<div class="t" id="t45" style="left:894.0px;top:386.1px;font-size:14px;font-weight:400;color:#000;">LineXY 0002</div>
<svg class="a" style="left:847px;top:413px;" width="8" height="10" viewBox="0 0 8 10"><path d="M1.5,1 L6.5,5 L1.5,9 Z" fill="none" stroke="#111" stroke-width="1.2"/></svg>
<svg class="a" style="left:861px;top:407px;" width="28" height="20" viewBox="0 0 28 20"><path d="M6,5.5 L21,14.5" stroke="#8a8a8a" stroke-width="2.8"/><path d="M6,5.5 L21,14.5" stroke="#e4e4e4" stroke-width="1.2"/><circle cx="6" cy="5.5" r="3.6" fill="#dcdcdc" stroke="#808080" stroke-width="1"/><circle cx="21" cy="15" r="3.6" fill="#dc5cf0" stroke="#909090" stroke-width="1"/></svg>
<div class="t" id="t46" style="left:894.0px;top:411.1px;font-size:14px;font-weight:400;color:#000;">LineXY 0001</div>
<svg class="a" style="left:847px;top:441px;" width="8" height="10" viewBox="0 0 8 10"><path d="M1.5,1 L6.5,5 L1.5,9 Z" fill="none" stroke="#111" stroke-width="1.2"/></svg>
<svg class="a" style="left:861px;top:431px;" width="26" height="28" viewBox="0 0 26 28"><path d="M5.5,23 A18,18 0 0 1 20,5" fill="none" stroke="#8a8a8a" stroke-width="2.6"/><path d="M5.5,23 A18,18 0 0 1 20,5" fill="none" stroke="#eee" stroke-width="1"/><path d="M20,6 V22.5 H6" fill="none" stroke="#444" stroke-width="1"/><path d="M19,21.5 L11,14" stroke="#444" stroke-width="1"/><path d="M9.5,12.5 l4,0.6 l-3.3,3 Z" fill="#333"/><circle cx="5.5" cy="23" r="4" fill="#dcdcdc" stroke="#808080"/><circle cx="20" cy="5" r="3.6" fill="#dc5cf0" stroke="#909090"/></svg>
<div class="t" id="t47" style="left:894.0px;top:439.1px;font-size:14px;font-weight:400;color:#000;transform:scaleX(1.018);">Arc_xyr 0001</div>
<div class="a" style="left:811px;top:634px;width:366px;height:13px;background:linear-gradient(#f2f2f0,#e0e1dd);border:1px solid #6f726b"></div>
<div class="a" style="left:823px;top:635px;width:261px;height:11px;background:linear-gradient(#b8d8d0,#8fbfb4 50%,#7aaea2);border-right:1px solid #6e9a90"></div>
<div class="a" style="left:1085px;top:638px;width:80px;height:4px;border-top:1px solid #555;border-bottom:1px solid #888;background:#ccc"></div>
<div class="a" style="left:811px;top:634px;width:13px;height:13px;background:linear-gradient(#f0f0ee,#cfd1cb);border:1px solid #6f726b"></div>
<div class="a" style="left:1164px;top:634px;width:13px;height:13px;background:linear-gradient(#f0f0ee,#cfd1cb);border:1px solid #6f726b"></div>
<svg class="a" style="left:814px;top:637px;" width="8" height="8" viewBox="0 0 8 8"><path d="M6,1 L2,4 L6,7 Z" fill="#aaa"/></svg>
<svg class="a" style="left:1167px;top:637px;" width="8" height="8" viewBox="0 0 8 8"><path d="M2,1 L6,4 L2,7 Z" fill="#111"/></svg>
<div class="a" style="left:811px;top:654px;width:348px;height:193px;border:1px solid #6f726b;background:#d3d7cf"></div>
<div class="a" style="left:1164px;top:655px;width:13px;height:192px;background:linear-gradient(90deg,#9fcac0,#7eb3a8 50%,#6ca397);border:1px solid #6f726b"></div>
<div class="a" style="left:1164px;top:655px;width:13px;height:13px;background:linear-gradient(#f0f0ee,#cfd1cb);border:1px solid #6f726b"></div>
<div class="a" style="left:1164px;top:834px;width:13px;height:13px;background:linear-gradient(#f0f0ee,#cfd1cb);border:1px solid #6f726b"></div>
<svg class="a" style="left:1166px;top:658px;" width="9" height="8" viewBox="0 0 9 8"><path d="M1,6 L4.5,2 L8,6 Z" fill="#aaa"/></svg>
<svg class="a" style="left:1166px;top:837px;" width="9" height="8" viewBox="0 0 9 8"><path d="M1,2 L4.5,6 L8,2 Z" fill="#aaa"/></svg>
<div class="t" id="t48" style="left:856.0px;top:776.1px;font-size:14px;font-weight:400;color:#111;transform:scaleX(1.055);">Sets global tool parameters depth step,</div>
<div class="t" id="t49" style="left:856.0px;top:793.1px;font-size:14px;font-weight:400;color:#111;transform:scaleX(1.042);">feed, spindle, final cut and etc.</div>
<svg class="a" style="left:0;top:0" width="1279" height="975" viewBox="0 0 1279 975">
<defs><linearGradient id="wp" x1="0" y1="0" x2="0" y2="1"><stop offset="0" stop-color="#eaa8f8"/><stop offset="0.5" stop-color="#d868f0"/><stop offset="1" stop-color="#c038e8"/></linearGradient></defs>
<rect x="980" y="657" width="54" height="42" rx="14" fill="#c6c8c1" opacity="0.8"/>
<rect x="985" y="690" width="42" height="78" rx="7" fill="#c6c8c1" opacity="0.8"/>
<path d="M991,694 L991,758 Q991,763 996,763 L1016,763 Q1021,763 1021,758 L1021,694 Z" fill="#e2e2e0" stroke="#4a4a48" stroke-width="3.2"/>
<g stroke="#a4a4a2" stroke-width="2.4"><path d="M993,708 L1019,697 M993,724 L1019,710 M993,740 L1019,726 M993,756 L1019,742 M999,762 L1019,756"/></g>
<g stroke="#fafafa" stroke-width="1.4"><path d="M993,714 L1019,702 M993,730 L1019,716 M993,746 L1019,732"/></g>
<path d="M984,666 Q984,662 990,662 L1024,662 Q1030,662 1030,666 L1028,690 Q1027,695 1021,695 L993,695 Q987,695 986,690 Z" fill="#f8f8f6" stroke="#4a4a48" stroke-width="3.5"/>
<ellipse cx="1007" cy="670.5" rx="15" ry="3" fill="#c8c8c6"/>
<path d="M990,677 L1024,677 L1023,690 L991,690 Z" fill="#d2d2d0"/>
<g transform="translate(966,726) rotate(-45)">
<path d="M8.5,-18.1 A20,20 0 0 1 6.5,18.91 L6.5,46.7 A6.5,6.5 0 0 1 -6.5,46.7 L-6.5,18.91 A20,20 0 0 1 -8.5,-18.1 L-8.5,-5 L8.5,-5 Z" fill="none" stroke="#4a4a48" stroke-width="8" stroke-linejoin="round"/>
<path d="M8.5,-18.1 A20,20 0 0 1 6.5,18.91 L6.5,46.7 A6.5,6.5 0 0 1 -6.5,46.7 L-6.5,18.91 A20,20 0 0 1 -8.5,-18.1 L-8.5,-5 L8.5,-5 Z" fill="url(#wp)" stroke="#fff" stroke-width="4" stroke-linejoin="round"/>
<circle cx="0" cy="46.7" r="4.5" fill="#fff"/><circle cx="0" cy="46.7" r="1.6" fill="#4a4a48"/>
</g>
</svg>
<div class="a" style="left:811px;top:849px;width:142px;height:30px;background:linear-gradient(#f4f4f2,#e4e5e1 50%,#c6c8c1);border:1px solid #8c8f87;border-radius:3px;"></div>
<div class="a" style="left:811px;top:881px;width:120px;height:31px;background:linear-gradient(#f4f4f2,#e4e5e1 50%,#c6c8c1);border:1px solid #8c8f87;border-radius:3px;"></div>
<div class="a" style="left:933px;top:881px;width:120px;height:31px;background:linear-gradient(#f4f4f2,#e4e5e1 50%,#c6c8c1);border:1px solid #8c8f87;border-radius:3px;"></div>
<div class="a" style="left:1055px;top:881px;width:122px;height:31px;background:linear-gradient(#f4f4f2,#e4e5e1 50%,#c6c8c1);border:1px solid #8c8f87;border-radius:3px;"></div>
<div class="a" style="left:957px;top:858px;width:12px;height:12px;background:linear-gradient(#fafafa,#e0e0e0);border:1px solid #888;border-radius:2px"></div>
<div class="t" id="t50" style="left:977.0px;top:856.6px;font-size:14px;font-weight:400;color:#111;transform:scaleX(1.049);">Auto refresh</div>
<div class="a" style="left:1120px;top:851px;width:57px;height:26px;background:#fff;border:1px solid #666;"></div>
<div class="a" style="left:1161px;top:852px;width:15px;height:24px;background:linear-gradient(#f4f4f2,#d3d7cf);border-left:1px solid #aaa"></div>
<svg class="a" style="left:1163px;top:854px;" width="11" height="20" viewBox="0 0 11 20"><path d="M5.5,2 L9,7 L2,7 Z M5.5,18 L9,13 L2,13 Z" fill="#111"/><path d="M1,10 H10" stroke="#888"/></svg>
<div class="t" id="t51" style="left:1125.0px;top:856.6px;font-size:14px;font-weight:400;color:#000;transform:scaleX(1.027);">1.0</div>
<div class="t" id="t52" style="left:869.0px;top:856.1px;font-size:14px;font-weight:400;color:#111;transform:scaleX(1.019);"><u>R</u>efresh</div>
<div class="t" id="t53" style="left:867.0px;top:888.1px;font-size:14px;font-weight:400;color:#111;"><u>S</u>ave</div>
<div class="t" id="t54" style="left:988.5px;top:888.1px;font-size:14px;font-weight:400;color:#111;transform:scaleX(0.993);"><u>O</u>pen</div>
<div class="t" id="t55" style="left:1101.5px;top:888.1px;font-size:14px;font-weight:400;color:#111;transform:scaleX(1.051);">Save <u>A</u>s</div>
<svg class="a" style="left:845px;top:853px;" width="24" height="23" viewBox="0 0 24 23"><path d="M4,12 A8,8 0 0 1 18,6 L21,3 L21,11 L13,11 L16,8 A5,5 0 0 0 7,12 Z" fill="#4a8ad0" stroke="#1f5aa0"/><path d="M20,11 A8,8 0 0 1 6,17 L3,20 L3,12 L11,12 L8,15 A5,5 0 0 0 17,11 Z" fill="#4a8ad0" stroke="#1f5aa0"/></svg>
<svg class="a" style="left:843px;top:884px;" width="24" height="25" viewBox="0 0 24 25"><rect x="2" y="15" width="20" height="8" rx="1" fill="#ddd" stroke="#555"/><path d="M8,2 H16 V9 H21 L12,17 L3,9 H8 Z" fill="#8be04e" stroke="#4a9a20"/></svg>
<svg class="a" style="left:964px;top:884px;" width="22" height="23" viewBox="0 0 22 23"><path d="M2,4 H9 L11,6 H19 V20 H2 Z" fill="#aaa" stroke="#555"/><rect x="5" y="8" width="13" height="9" fill="#f4f4f4" stroke="#777"/><path d="M1,12 H20 V21 H1 Z" fill="#c8c8c0" stroke="#555"/></svg>
<svg class="a" style="left:1078px;top:884px;" width="24" height="25" viewBox="0 0 24 25"><rect x="2" y="15" width="20" height="8" rx="1" fill="#ddd" stroke="#555"/><rect x="1" y="1" width="20" height="6" fill="#8be04e" stroke="#4a9a20"/><path d="M8,5 H16 V10 H21 L12,18 L3,10 H8 Z" fill="#8be04e" stroke="#4a9a20"/></svg>
<svg class="a" style="left:0;top:0" width="1279" height="120" viewBox="0 0 1279 120">
<path d="M7.5,0.5 h3 v6 h6 v3 h-6 v6 h-3 v-6 h-6 v-3 h6 Z" transform="translate(820.5,37.5)" fill="#d6d6d2" stroke="#555" stroke-width="1.2"/>
<rect x="855.5" y="44" width="15" height="4.5" rx="0.8" fill="#d6d6d2" stroke="#555" stroke-width="1.2"/>
<path d="M887.5,36 h12 l5,5 v14.5 h-17 Z" fill="#f4f4f2" stroke="#9a9a96" stroke-width="1"/>
<path d="M890,40 h8 M890,43 h10 M890,46 h10 M890,49 h10" stroke="#c8c8c4" stroke-width="1"/>
<path d="M890,45 l6,-5 v3 h6 q5,0 5,5 q0,4 -4,5 q2,-3 -2,-4 h-5 v3 Z" fill="#f6d84a" stroke="#c89a10" stroke-width="1"/>
<path d="M920.5,35 V57 M933.5,74 V98 M1034.5,35 V57" stroke="#bfc1ba" stroke-width="1"/>
<ellipse cx="945" cy="53" rx="8" ry="2" fill="#c5c7c0"/>
<path d="M936,44 l7,-7 v4 h2 q8,0 8,8 q0,5 -5,6 q3,-4 -1,-7 h-4 v4 Z" fill="#f4d040" stroke="#d49a10" stroke-width="1"/>
<ellipse cx="976" cy="53" rx="8" ry="2" fill="#c5c7c0"/>
<path d="M983,44 l-7,-7 v4 h-2 q-8,0 -8,8 q0,5 5,6 q-3,-4 1,-7 h4 v4 Z" fill="#7ad040" stroke="#3a9a20" stroke-width="1"/>
<rect x="1002.5" y="36.5" width="11.5" height="12" fill="#f6f6f4" stroke="#777" stroke-width="1"/>
<path d="M1004.5,40 h7 M1004.5,42.5 h7 M1004.5,45 h7" stroke="#aaa"/>
<rect x="1008.5" y="43.5" width="12" height="12" fill="#f6f6f4" stroke="#777" stroke-width="1"/>
<path d="M1010.5,47 h8 M1010.5,49.5 h8 M1010.5,52 h8" stroke="#aaa"/>
<ellipse cx="1057.5" cy="55" rx="7" ry="1.5" fill="#c5c7c0"/>
<path d="M1057.5,36.5 L1066.5,46.5 H1062.3 V54.5 H1053 V46.5 H1048.5 Z" fill="#3a7cc8" stroke="#1f4f90" stroke-width="1"/>
<ellipse cx="1091.5" cy="55" rx="7" ry="1.5" fill="#c5c7c0"/>
<path d="M1091.5,54.2 L1100.5,44.5 H1096 V36.5 H1087 V44.5 H1082.5 Z" fill="#3a7cc8" stroke="#1f4f90" stroke-width="1"/>
<g stroke="#333" stroke-width="2.2" stroke-linecap="round">
<path d="M1116,37.6 H1127.5 M1122,42.4 H1134 M1122,47.1 H1132 M1116,52.3 H1127.5"/>
<path d="M1157,37.6 H1168 M1150.5,42.4 H1161.5 M1150.5,47.1 H1160 M1157,52.3 H1168"/>
</g>
<path d="M1115,42.5 L1118.8,45.2 L1115,48 Z" fill="#f08010"/>
<path d="M1168.8,42.5 L1165,45.2 L1168.8,48 Z" fill="#f08010"/>
<rect x="822" y="77" width="21.5" height="14.5" rx="1.5" fill="#e6e6e4" stroke="#999" stroke-width="1"/>
<circle cx="822" cy="90.5" r="3.6" fill="#d84ae8" stroke="#8a8a8a" stroke-width="1"/>
<path d="M860.5,81.2 L877,90.5" stroke="#888" stroke-width="2.6"/><path d="M860.5,81.2 L877,90.5" stroke="#eee" stroke-width="1"/>
<circle cx="860.5" cy="81.2" r="3.8" fill="#dcdcdc" stroke="#8a8a8a" stroke-width="1"/><circle cx="877" cy="90.5" r="3.8" fill="#d84ae8" stroke="#8a8a8a" stroke-width="1"/>
<circle cx="906" cy="85.8" r="11.6" fill="#e2e2e0" stroke="#999" stroke-width="1.2"/>
<circle cx="906" cy="85.8" r="3.2" fill="#d84ae8"/>
<path d="M948.4,93.9 A16,16 0 0 1 964,77.7" fill="none" stroke="#888" stroke-width="2.6"/><path d="M948.4,93.9 A16,16 0 0 1 964,77.7" fill="none" stroke="#eee" stroke-width="1"/>
<path d="M964,78 V93.4 H948" fill="none" stroke="#444" stroke-width="1"/>
<path d="M963,92.5 L955,85" stroke="#444" stroke-width="1"/><path d="M953.5,83.5 l4,0.5 l-3.5,3 Z" fill="#333"/>
<circle cx="948.4" cy="93.9" r="4.2" fill="#dcdcdc" stroke="#8a8a8a" stroke-width="1"/><circle cx="964.1" cy="77.7" r="3.6" fill="#d84ae8" stroke="#8a8a8a" stroke-width="1"/>
<path d="M987,90.9 A14,14 0 0 1 1003.2,80.2" fill="none" stroke="#888" stroke-width="2.6"/><path d="M987,90.9 A14,14 0 0 1 1003.2,80.2" fill="none" stroke="#eee" stroke-width="1"/>
<circle cx="987" cy="90.9" r="3.8" fill="#dcdcdc" stroke="#8a8a8a" stroke-width="1"/><circle cx="1003.2" cy="80.2" r="3.6" fill="#d84ae8" stroke="#8a8a8a" stroke-width="1"/>
<path d="M1024.5,93.9 A17,17 0 0 1 1040,78" fill="none" stroke="#888" stroke-width="2.6"/><path d="M1024.5,93.9 A17,17 0 0 1 1040,78" fill="none" stroke="#eee" stroke-width="1"/>
<path d="M1040,93.4 L1031.5,85.5 M1035,93.4 H1045.5 M1040,88 V99" stroke="#444" stroke-width="1"/><path d="M1029.5,83.5 l4.5,0.8 l-3.5,3.2 Z" fill="#333"/>
<circle cx="1024.5" cy="93.9" r="4" fill="#dcdcdc" stroke="#8a8a8a" stroke-width="1"/><circle cx="1040" cy="78" r="4" fill="#d84ae8" stroke="#8a8a8a" stroke-width="1"/>
<path d="M1062.5,80.9 L1078.9,90.5" stroke="#888" stroke-width="2.6"/><path d="M1062.5,80.9 L1078.9,90.5" stroke="#eee" stroke-width="1"/>
<circle cx="1062.5" cy="80.9" r="3.8" fill="#dcdcdc" stroke="#8a8a8a" stroke-width="1"/><circle cx="1078.9" cy="90.5" r="3.8" fill="#d84ae8" stroke="#8a8a8a" stroke-width="1"/>
<path d="M1100.2,90.9 L1119.4,78.7" stroke="#888" stroke-width="1"/>
<circle cx="1119.4" cy="78.7" r="3.2" fill="#dcdcdc" stroke="#8a8a8a" stroke-width="1"/><circle cx="1112.7" cy="82.7" r="3.2" fill="#dcdcdc" stroke="#8a8a8a" stroke-width="1"/><circle cx="1106.9" cy="86.8" r="3.2" fill="#dcdcdc" stroke="#8a8a8a" stroke-width="1"/><circle cx="1100.2" cy="90.9" r="3.2" fill="#d84ae8" stroke="#8a8a8a" stroke-width="1"/>
<path d="M1160.5,84 H1166.5 L1163.5,88 Z" fill="#111"/>
</svg>
<div class="a" style="left:1188px;top:84px;width:83px;height:58px;background:linear-gradient(#30ff30,#10f010 30%,#00e000 55%,#00d800);border:1px solid #20c020;border-radius:5px;"></div>
<div class="a" style="left:1188px;top:202px;width:83px;height:58px;background:linear-gradient(#ffff40,#ffff00 50%,#e8e800);border:1px solid #c0c000;border-radius:5px;"></div>
<div class="a" style="left:1188px;top:320px;width:83px;height:58px;background:linear-gradient(#a6cdc5,#86b3aa 40%,#689a8f 75%,#5d8c81);border:1px solid #5b877d;border-radius:5px;"></div>
<div class="a" style="left:1188px;top:438px;width:83px;height:58px;background:linear-gradient(#a6cdc5,#86b3aa 40%,#689a8f 75%,#5d8c81);border:1px solid #5b877d;border-radius:5px;"></div>
<div class="a" style="left:1188px;top:556px;width:83px;height:58px;background:linear-gradient(#ffff40,#ffff00 50%,#e8e800);border:1px solid #c0c000;border-radius:5px;"></div>
<div class="a" style="left:1188px;top:674px;width:83px;height:58px;background:linear-gradient(#a6cdc5,#86b3aa 40%,#689a8f 75%,#5d8c81);border:1px solid #5b877d;border-radius:5px;"></div>
<div class="a" style="left:1188px;top:792px;width:83px;height:58px;background:linear-gradient(#a6cdc5,#86b3aa 40%,#689a8f 75%,#5d8c81);border:1px solid #5b877d;border-radius:5px;"></div>
<svg class="a" style="left:1205px;top:89px;" width="48" height="48" viewBox="0 0 48 48"><rect x="0.5" y="0.5" width="47" height="47" fill="#ffff00" stroke="#333" stroke-width="1" stroke-dasharray="1 1"/><circle cx="24" cy="24" r="19.8" fill="none" stroke="#f41c1c" stroke-width="2.4"/><circle cx="24" cy="24" r="9.2" fill="#f41c1c" stroke="#3a2a10" stroke-width="1"/><path id="ep" d="M10.5,30 A14.2,14.2 0 1 1 37.5,30" fill="none"/><text font-size="6.3" fill="#1a2a8a" font-family="Liberation Sans" font-weight="bold" textLength="50" lengthAdjust="spacingAndGlyphs"><textPath href="#ep">Emergency-Stop</textPath></text></svg>
<svg class="a" style="left:1204px;top:206px;" width="52" height="52" viewBox="0 0 52 52"><circle cx="26" cy="25.8" r="23.8" fill="#00e400"/><ellipse cx="26" cy="17" rx="16" ry="10" fill="#c8ffc8" opacity="0.75"/><circle cx="26" cy="28" r="12" fill="#00ee00"/><path d="M33.5,12.5 A15,15 0 1 1 18.5,12.5" fill="none" stroke="#0a3a0a" stroke-width="4" opacity="0.5" transform="translate(0.8,1.5)"/><path d="M33.5,12.5 A15,15 0 1 1 18.5,12.5" fill="none" stroke="#fff" stroke-width="4"/><rect x="23.2" y="7.4" width="5.7" height="20.5" fill="#fff"/><rect x="23.2" y="26.5" width="5.7" height="1.5" fill="#1a5a1a" opacity="0.6"/></svg>
<svg class="a" style="left:1209px;top:329px;" width="40" height="40" viewBox="0 0 40 40"><rect x="1" y="1" width="38" height="38" rx="6" fill="#6f6450" stroke="#eee" stroke-width="1.5"/><path d="M10,3 l5,6 h-3 v7 h-4 v-7 h-3 Z" fill="#f05a10"/><path d="M20,3 l5,6 h-3 v7 h-4 v-7 h-3 Z" fill="#e8c040"/><path d="M30,16 l5,-6 h-3 v-7 h-4 v7 h-3 Z" fill="#f05a10"/><path d="M4,20 l6,-5 v3 h6 v4 h-6 v3 Z" fill="#e8c040"/><path d="M36,20 l-6,-5 v3 h-6 v4 h6 v3 Z" fill="#e8c040"/><path d="M10,37 l5,-6 h-3 v-7 h-4 v7 h-3 Z" fill="#a0e040"/><path d="M20,37 l5,-6 h-3 v-7 h-4 v7 h-3 Z" fill="#e8c040"/><path d="M30,24 l5,6 h-3 v7 h-4 v-7 h-3 Z" fill="#a0e040"/></svg>
<svg class="a" style="left:1210px;top:443px;" width="44" height="40" viewBox="0 0 44 40"><rect x="3" y="2.5" width="30" height="36" fill="#eee" stroke="#111" stroke-width="2.5"/><rect x="6" y="5" width="12" height="33" fill="#d0d0d0"/><rect x="19.5" y="6" width="21" height="26" fill="#e8c070" stroke="#111" stroke-width="2.2"/><rect x="21" y="12.5" width="18" height="4" fill="#3a7ad0"/><path d="M24,9.5 h13 M24,20 h13 M24,23.5 h13 M24,27 h13" stroke="#7a5a20" stroke-width="1"/><path d="M30,20 l8,8 M32,19 l6,6" stroke="#e05010" stroke-width="1" stroke-dasharray="1 1"/></svg>
<div class="t" id="t56" style="left:1206.7px;top:469.0px;font-size:22.5px;font-weight:700;color:#fff;transform:scaleX(1.074);-webkit-text-stroke:0.49px #fff;text-shadow:0 0 1px #333,1px 1px 1px #222;">MDI</div>
<svg class="a" style="left:0;top:0" width="1279" height="975" viewBox="0 0 1279 975">
<path d="M1207,563 L1221.5,562 L1222.5,575 L1208,576 Z" fill="#1a1420" stroke="#9a9a9a" stroke-width="1.5"/>
<path d="M1210,567 l3,2 l2,-2" stroke="#a03080" stroke-width="0.8" fill="none"/>
<path d="M1208,576 L1222.5,575 L1229,584 L1212,586 Z" fill="#c8c8c8" stroke="#777" stroke-width="0.8"/>
<path d="M1227,564 H1233.5 V569 H1236.5 L1232,574.5 L1227.5,569 H1230.5 V566.5 H1227 Z" fill="#e02010" stroke="#901010" stroke-width="0.6"/>
<path d="M1219,600.5 H1212.5 V594 H1209.5 L1214,588 L1218.5,594 H1215.5 V597.5 H1219 Z" fill="#30d020" stroke="#108010" stroke-width="0.6"/>
<path d="M1221.5,591.5 L1237,583 L1254,589.5 L1254,595 L1239,607.5 L1221.5,598 Z" fill="#333" stroke="#111" stroke-width="0.6"/>
<path d="M1223.5,592 L1238,584.5 L1252,590 L1238.5,598.5 Z" fill="#c8bc98"/>
<path d="M1227,590 L1241,596 M1231,588 L1245,594 M1235,586 L1249,592 M1229,594 L1243,586.5 M1234,596.5 L1247,589" stroke="#8a8068" stroke-width="0.6"/>
<path d="M1239,598.5 L1254,590 L1254,595 L1239,604 Z" fill="#b8bcc0" stroke="#555" stroke-width="0.5"/>
<path d="M1239,601 L1254,592.5" stroke="#e8e8e8" stroke-width="0.8"/>
<path d="M1235,577 L1238.5,577 L1238.5,588 L1235,589 Z" fill="#333"/>
<path d="M1249,580 L1252,580.5 L1252,590 L1249,590 Z" fill="#333"/>
<path d="M1237.5,578 L1251,582 L1251,586 L1237.5,582 Z" fill="#c0c4c8" stroke="#666" stroke-width="0.5"/>
<rect x="1239" y="571.5" width="3.5" height="4.5" fill="#d03020"/>
<rect x="1239.5" y="576" width="2.5" height="4" fill="#aaa"/>
<ellipse cx="1241" cy="580.5" rx="2" ry="2" fill="#ddd" stroke="#777" stroke-width="0.5"/>
<rect x="1251.5" y="582" width="3" height="3" fill="#d03020"/>
<rect x="1226" y="598" width="3" height="3" fill="#d03020"/>
</svg>
<svg class="a" style="left:0;top:0" width="1279" height="975" viewBox="0 0 1279 975">
<ellipse cx="1231" cy="724.8" rx="20" ry="1.6" fill="#3a5a54" opacity="0.6"/>
<path d="M1233.5,697 L1210.5,721.5" stroke="#0a3a9a" stroke-width="8" stroke-linecap="round"/>
<path d="M1233.5,697 L1210.5,721.5" stroke="#2a78e0" stroke-width="5.6" stroke-linecap="round"/>
<path d="M1230,702 L1214,719" stroke="#0a3aa0" stroke-width="1.6"/>
<circle cx="1211.5" cy="720.5" r="1.3" fill="#cfe8f0"/>
<path d="M1236,681 Q1240,677.5 1245.5,680.5 L1242,685 L1244,689 L1248.5,687.5 Q1248,694 1242,696.5 L1237.5,699.5 L1232.5,695.5 L1234.5,691 Q1232.5,685 1236,681 Z" fill="#d4d4d4" stroke="#8a8a8a" stroke-width="0.8"/>
<path d="M1237,684 Q1239,681 1242,681.5" stroke="#fafafa" stroke-width="1.5" fill="none"/>
<rect x="1236" y="689" width="4" height="4" fill="#555" transform="rotate(45 1238 691)"/>
<path d="M1208,681 L1227,700" stroke="#777" stroke-width="3" stroke-linecap="round"/><path d="M1208,681 L1227,700" stroke="#f4f4f4" stroke-width="1.6" stroke-linecap="round"/>
<path d="M1228,701 L1249,721" stroke="#8a1010" stroke-width="9.5" stroke-linecap="round"/>
<path d="M1228,701 L1249,721" stroke="#d82a20" stroke-width="7.5" stroke-linecap="round"/>
<path d="M1230,700.5 L1250,719.5" stroke="#ff9a9a" stroke-width="0.9"/>
<path d="M1227,704 L1246,722" stroke="#6a1010" stroke-width="1" stroke-dasharray="1 1.5"/>
</svg>
<svg class="a" style="left:0;top:0" width="1279" height="975" viewBox="0 0 1279 975">
<path d="M1209,823.5 V809 H1209.8 V802 Q1209.8,800.5 1211.5,800.5 H1224.5 Q1226.3,800.5 1226.3,802 V808.8 H1230 V802 Q1230,800.5 1231.7,800.5 H1245.5 Q1247.2,800.5 1247.2,802 V808.8 H1249.5 V823.5 Z" fill="#f4f4f4" stroke="#555a60" stroke-width="1.1"/>
<rect x="1231" y="801.5" width="15" height="7" fill="#e2e2e2"/>
<rect x="1231" y="809.5" width="18" height="13.5" fill="#e4e4e4"/>
<circle cx="1229" cy="801.3" r="2.2" fill="#f0d020" stroke="#d02010" stroke-width="1"/>
<path d="M1215.5,842 Q1216,832 1223,830 L1228.5,828.5 L1234,830 Q1241,832 1241.8,842 Z" fill="#f6f6f8"/>
<path d="M1225.5,826 V831 H1231.5 V826 Z" fill="#e0c8a8"/>
<ellipse cx="1228.5" cy="820.5" rx="5.6" ry="7.5" fill="#f0dcc0"/>
<path d="M1222.8,819 Q1222,812.3 1228.5,812.3 Q1235,812.3 1234.2,819 Q1233,815 1228.5,815.5 Q1224,815 1222.8,819 Z" fill="#b8a080"/>
</svg>
<div class="a" style="left:0px;top:970px;width:1279px;height:1px;background:#2f5048"></div>
<div class="a" style="left:0px;top:971px;width:1279px;height:4px;background:#d3d7cf"></div>
<div class="a" style="left:2px;top:973.5px;width:18px;height:1.5px;background:#3c3c3c"></div>
<div class="a" style="left:34px;top:973.5px;width:136px;height:1.5px;background:#3c3c3c"></div>
<div class="a" style="left:174px;top:973.5px;width:136px;height:1.5px;background:#3c3c3c"></div>
<div class="a" style="left:314px;top:973.5px;width:136px;height:1.5px;background:#3c3c3c"></div>
<div class="a" style="left:454px;top:973.5px;width:136px;height:1.5px;background:#3c3c3c"></div>
<div class="a" style="left:594px;top:973.5px;width:136px;height:1.5px;background:#3c3c3c"></div>
<div class="a" style="left:734px;top:973.5px;width:136px;height:1.5px;background:#3c3c3c"></div>
<div class="a" style="left:874px;top:973.5px;width:136px;height:1.5px;background:#3c3c3c"></div>
<div class="a" style="left:1014px;top:973.5px;width:136px;height:1.5px;background:#3c3c3c"></div>
<div class="a" style="left:1154px;top:973.5px;width:98px;height:1.5px;background:#a8aaa4"></div>
<div class="a" style="left:1px;top:915px;width:83px;height:54px;background:linear-gradient(#82b0a7,#6e9f95 40%,#5f9085 80%,#5a897f);border:1px solid #4f7a70;border-radius:5px;"></div>
<div class="a" style="left:133px;top:915px;width:83px;height:54px;background:linear-gradient(#82b0a7,#6e9f95 40%,#5f9085 80%,#5a897f);border:1px solid #4f7a70;border-radius:5px;"></div>
<div class="a" style="left:265px;top:915px;width:83px;height:54px;background:linear-gradient(#82b0a7,#6e9f95 40%,#5f9085 80%,#5a897f);border:1px solid #4f7a70;border-radius:5px;"></div>
<div class="a" style="left:397px;top:915px;width:83px;height:54px;background:linear-gradient(#82b0a7,#6e9f95 40%,#5f9085 80%,#5a897f);border:1px solid #4f7a70;border-radius:5px;"></div>
<div class="a" style="left:529px;top:915px;width:83px;height:54px;background:linear-gradient(#82b0a7,#6e9f95 40%,#5f9085 80%,#5a897f);border:1px solid #4f7a70;border-radius:5px;"></div>
<div class="a" style="left:661px;top:915px;width:83px;height:54px;background:linear-gradient(#82b0a7,#6e9f95 40%,#5f9085 80%,#5a897f);border:1px solid #4f7a70;border-radius:5px;"></div>
<div class="a" style="left:793px;top:915px;width:83px;height:54px;background:linear-gradient(#82b0a7,#6e9f95 40%,#5f9085 80%,#5a897f);border:1px solid #4f7a70;border-radius:5px;"></div>
<div class="a" style="left:925px;top:915px;width:83px;height:54px;background:linear-gradient(#82b0a7,#6e9f95 40%,#5f9085 80%,#5a897f);border:1px solid #4f7a70;border-radius:5px;"></div>
<div class="a" style="left:1057px;top:915px;width:83px;height:54px;background:linear-gradient(#82b0a7,#6e9f95 40%,#5f9085 80%,#5a897f);border:1px solid #4f7a70;border-radius:5px;"></div>
<div class="a" style="left:1189px;top:915px;width:83px;height:54px;background:linear-gradient(#82b0a7,#6e9f95 40%,#5f9085 80%,#5a897f);border:1px solid #4f7a70;border-radius:5px;"></div>
<svg class="a" style="left:31px;top:929px;" width="22" height="22" viewBox="0 0 22 22"><path d="M6,4 h5 l1,2 h6 v10 h-12 Z" fill="#aaa" stroke="#555"/><rect x="8" y="7" width="9" height="7" fill="#f4f4f4" stroke="#777"/><path d="M4,11 h15 v8 h-15 Z" fill="#c8c8c0" stroke="#555"/></svg>
<svg class="a" style="left:150px;top:918px;" width="48" height="48" viewBox="0 0 48 48"><defs><linearGradient id="pg" x1="0" y1="0" x2="0" y2="1"><stop offset="0" stop-color="#bfe0ff"/><stop offset="0.5" stop-color="#3a98f0"/><stop offset="1" stop-color="#8cc8ff"/></linearGradient></defs><path d="M3,2 L40,26 L3,46 Z" fill="url(#pg)" stroke="#0a3a9a" stroke-width="2.5" stroke-linejoin="round"/></svg>
<svg class="a" style="left:284px;top:920px;" width="46" height="46" viewBox="0 0 46 46"><path d="M14,1 h18 l13,13 v18 l-13,13 h-18 l-13,-13 v-18 Z" fill="#d42020" stroke="#a01010" stroke-width="1"/><path d="M14,14 L32,32 M32,14 L14,32" stroke="#fff" stroke-width="6"/></svg>
<svg class="a" style="left:414px;top:919px;" width="50" height="46" viewBox="0 0 50 46"><defs><linearGradient id="ps" x1="0" y1="0" x2="1" y2="0"><stop offset="0" stop-color="#1a6ad8"/><stop offset="0.5" stop-color="#d8f0ff"/><stop offset="1" stop-color="#1a6ad8"/></linearGradient></defs><rect x="4" y="2" width="14" height="42" fill="url(#ps)" stroke="#0a4aa8"/><rect x="32" y="2" width="14" height="42" fill="url(#ps)" stroke="#0a4aa8"/></svg>
<svg class="a" style="left:545px;top:926px;" width="14" height="30" viewBox="0 0 14 30"><path d="M3.5,4 V25.5 M2.5,4 H11 M3.5,14.5 H11 M2.5,25.5 H11" stroke="#111" stroke-width="2" fill="none"/></svg>
<div class="t" id="t57" style="left:558.5px;top:923.6px;font-size:9.5px;font-weight:700;color:#161616;transform:scaleX(0.964);font-family:'Liberation Mono',monospace;">G0 X10</div>
<div class="t" id="t58" style="left:558.5px;top:935.8px;font-size:9.5px;font-weight:700;color:#161616;transform:scaleX(0.964);font-family:'Liberation Mono',monospace;">G1 Y20</div>
<div class="t" id="t59" style="left:558.5px;top:947.6px;font-size:9.5px;font-weight:700;color:#161616;transform:scaleX(0.964);font-family:'Liberation Mono',monospace;">G1 Z30</div>
<div class="t" id="t60" style="left:689.8px;top:923.6px;font-size:9.5px;font-weight:700;color:#4d7870;transform:scaleX(0.976);font-family:'Liberation Mono',monospace;">G0 X10</div>
<div class="t" id="t61" style="left:689.8px;top:935.8px;font-size:9.5px;font-weight:700;color:#4d7870;transform:scaleX(0.976);font-family:'Liberation Mono',monospace;">G1 Y20</div>
<div class="t" id="t62" style="left:689.8px;top:947.6px;font-size:9.5px;font-weight:700;color:#4d7870;transform:scaleX(0.976);font-family:'Liberation Mono',monospace;">G1 Z30</div>
<svg class="a" style="left:680px;top:936px;" width="12" height="26" viewBox="0 0 12 26"><path d="M9.5,4.5 H4.5 V22" stroke="#3a5f58" stroke-width="1.3" fill="none"/><path d="M1.5,18 L4.5,23.5 L7.5,18" stroke="#3a5f58" stroke-width="1.3" fill="none"/></svg>
<svg class="a" style="left:825px;top:930px;" width="22" height="24" viewBox="0 0 22 24"><path d="M10,2 H2 V19 H12" stroke="#e02020" stroke-width="1.5" fill="none"/><path d="M11,16 l4,3 l-4,3 Z" fill="#e02020"/><path d="M12,16 L16,4" stroke="#111" stroke-width="2"/></svg>
<div class="t" id="t63" style="left:955.0px;top:934.1px;font-size:14px;font-weight:400;color:#111;transform:scaleX(1.028);">M1</div>
<svg class="a" style="left:0;top:0" width="1279" height="975" viewBox="0 0 1279 975">
<rect x="1078" y="927" width="40.5" height="32" rx="2.5" fill="#eeeef2" stroke="#b4b4c0" stroke-width="1"/>
<rect x="1079" y="928" width="38.5" height="3.5" fill="#c8c8cc"/>
<g fill="#3aa020" stroke="#1a5a10" stroke-width="0.6">
<path d="M1081,933 L1087.5,933.5 L1085.5,935.5 L1089.5,939.5 L1087.5,941.5 L1083.5,937.5 L1081.5,939.5 Z"/>
<path d="M1115.5,933 L1115,939.5 L1113,937.5 L1109,941.5 L1107,939.5 L1111,935.5 L1109,933.5 Z"/>
<path d="M1081,956 L1081.5,949.5 L1083.5,951.5 L1087.5,947.5 L1089.5,949.5 L1085.5,953.5 L1087.5,955.5 Z"/>
<path d="M1115.5,956 L1109,955.5 L1111,953.5 L1107,949.5 L1109,947.5 L1113,951.5 L1115,949.5 Z"/>
</g>
<path d="M1210,962 L1213,930 H1246 L1248.5,962 Z" fill="#f8f8f8" stroke="#aaa" stroke-width="0.8"/>
<path d="M1210,962.3 H1248.5" stroke="#e07a20" stroke-width="1.4"/>
<g stroke="#555" stroke-width="1.2" fill="none">
<path d="M1215,931 v-3 a1.2,1.2 0 0 1 2.4,0 v3 M1220,931 v-3 a1.2,1.2 0 0 1 2.4,0 v3 M1225,931 v-3 a1.2,1.2 0 0 1 2.4,0 v3 M1230,931 v-3 a1.2,1.2 0 0 1 2.4,0 v3 M1235,931 v-3 a1.2,1.2 0 0 1 2.4,0 v3 M1240,931 v-3 a1.2,1.2 0 0 1 2.4,0 v3"/>
</g>
<g stroke="#aaa" stroke-width="0.9"><path d="M1215.5,935.5 h22 M1215.5,939 h8 M1215.5,942 h20 M1215.5,945 h9 M1215.5,950 h6 M1225,950 h7 M1215.5,953 h10"/></g>
<path d="M1229,951 L1250,930.5 L1253.5,934 L1232.5,954.5 Z" fill="#f0a030" stroke="#a05010" stroke-width="0.8"/>
<path d="M1229,951 L1227.5,955.5 L1232.5,954.5 Z" fill="#f4dcb0" stroke="#a05010" stroke-width="0.6"/>
<circle cx="1228" cy="955" r="0.9" fill="#111"/>
</svg>
<div class="a" style="left:0px;top:710px;width:805px;height:200px;border-top:1px solid #f4f5f2;border-left:1px solid #a0a39c"></div>
<div class="a" style="left:1px;top:908px;width:804px;height:1px;background:#b9bcb4"></div>
<div class="a" style="left:1px;top:911px;width:804px;height:1px;background:#b4b7af"></div>
<div class="a" style="left:7px;top:733px;width:117px;height:56px;border:1px solid #c2c5bd;border-radius:4px;box-shadow:inset 1px 1px 0 #eceee9;"></div>
<div class="a" style="left:7px;top:800px;width:117px;height:65px;border:1px solid #c2c5bd;border-radius:4px;box-shadow:inset 1px 1px 0 #eceee9;"></div>
<div class="a" style="left:7px;top:876px;width:117px;height:31px;border:1px solid #c2c5bd;border-radius:4px;box-shadow:inset 1px 1px 0 #eceee9;"></div>
<div class="a" style="left:126px;top:724px;width:173px;height:78px;border:1px solid #c2c5bd;border-radius:4px;box-shadow:inset 1px 1px 0 #eceee9;"></div>
<div class="a" style="left:126px;top:814px;width:173px;height:92px;border:1px solid #c2c5bd;border-radius:4px;box-shadow:inset 1px 1px 0 #eceee9;"></div>
<div class="a" style="left:300px;top:724px;width:188px;height:183px;border:1px solid #c2c5bd;border-radius:4px;box-shadow:inset 1px 1px 0 #eceee9;"></div>
<div class="a" style="left:491px;top:724px;width:97px;height:183px;border:1px solid #c2c5bd;border-radius:4px;box-shadow:inset 1px 1px 0 #eceee9;"></div>
<div class="a" style="left:590px;top:723px;width:199px;height:184px;border:1px solid #c2c5bd;border-radius:4px;box-shadow:inset 1px 1px 0 #eceee9;"></div>
<div class="a" style="left:0;top:710.5px;width:112.8px;height:22.4px;overflow:hidden">
<div class="t" id="t64" style="left:4.7px;top:4.9px;font-size:14px;font-weight:700;color:#111;transform:scaleX(1.115);-webkit-text-stroke:0.31px #111;">Tool information</div>
</div>
<div class="t" id="t65" style="left:162.5px;top:715.4px;font-size:14px;font-weight:700;color:#111;transform:scaleX(1.131);-webkit-text-stroke:0.31px #111;">Max. Velocity</div>
<div class="t" id="t66" style="left:334.4px;top:715.4px;font-size:14px;font-weight:700;color:#111;transform:scaleX(1.103);-webkit-text-stroke:0.31px #111;">Compensation Z</div>
<div class="t" id="t67" style="left:510.8px;top:715.4px;font-size:14px;font-weight:700;color:#111;transform:scaleX(1.075);-webkit-text-stroke:0.31px #111;">Cooling</div>
<div class="t" id="t68" style="left:637.8px;top:715.4px;font-size:14px;font-weight:700;color:#111;transform:scaleX(1.157);-webkit-text-stroke:0.31px #111;">Spindle [rpm]</div>
<div class="t" id="t69" style="left:38.5px;top:790.8px;font-size:14px;font-weight:700;color:#111;transform:scaleX(1.072);-webkit-text-stroke:0.31px #111;">G-Code</div>
<div class="t" id="t70" style="left:32.8px;top:866.6px;font-size:14px;font-weight:700;color:#111;transform:scaleX(1.122);-webkit-text-stroke:0.31px #111;">Program</div>
<div class="a" style="left:0;top:732.4px;width:91.2px;height:20.8px;overflow:hidden">
<div class="t" id="t71" style="left:13.3px;top:4.6px;font-size:13px;font-weight:400;color:#222;transform:scaleX(1.110);">ToolDiaroffset</div>
</div>
<div class="a" style="left:0;top:747.3px;width:91.2px;height:20.8px;overflow:hidden">
<div class="t" id="t72" style="left:18.0px;top:4.6px;font-size:13px;font-weight:700;color:#111;transform:scaleX(1.168);-webkit-text-stroke:0.29px #111;">18</div>
</div>
<div class="a" style="left:0;top:747.3px;width:91.2px;height:20.8px;overflow:hidden">
<div class="t" id="t73" style="left:59.5px;top:4.6px;font-size:13px;font-weight:700;color:#111;transform:scaleX(1.064);-webkit-text-stroke:0.29px #111;">450.000</div>
</div>
<div class="a" style="left:0;top:763.1px;width:117.9px;height:20.8px;overflow:hidden">
<div class="t" id="t74" style="left:13.3px;top:4.6px;font-size:13px;font-weight:700;color:#111;transform:scaleX(1.230);-webkit-text-stroke:0.29px #111;">Schaftfräser</div>
</div>
<div class="a" style="left:0;top:763.1px;width:117.9px;height:20.8px;overflow:hidden">
<div class="t" id="t75" style="left:111.7px;top:4.6px;font-size:13px;font-weight:700;color:#111;transform:scaleX(0.889);-webkit-text-stroke:0.29px #111;">4mm</div>
</div>
<div class="a" style="left:0;top:808.2px;width:117.9px;height:20.8px;overflow:hidden">
<div class="t" id="t76" style="left:13.3px;top:4.6px;font-size:13px;font-weight:700;color:#111;transform:scaleX(1.259);-webkit-text-stroke:0.29px #111;">M0 M5 M9 M0</div>
</div>
<div class="a" style="left:0;top:824.0px;width:165.0px;height:20.8px;overflow:hidden">
<div class="t" id="t77" style="left:13.3px;top:4.6px;font-size:13px;font-weight:700;color:#111;transform:scaleX(1.222);-webkit-text-stroke:0.29px #111;">G8 G17 G21 G40 G49</div>
</div>
<div class="a" style="left:0;top:840.6px;width:128.1px;height:20.8px;overflow:hidden">
<div class="t" id="t78" style="left:18.5px;top:4.6px;font-size:13px;font-weight:700;color:#111;transform:scaleX(1.196);-webkit-text-stroke:0.29px #111;">G90 G91.1 G94 G97</div>
</div>
<div class="t" id="t79" style="left:134.3px;top:845.2px;font-size:13px;font-weight:700;color:#111;transform:scaleX(1.127);-webkit-text-stroke:0.29px #111;">G97</div>
<div class="t" id="t80" style="left:108.7px;top:837.0px;font-size:11px;font-weight:700;color:#222;transform:scaleX(1.388);-webkit-text-stroke:0.24px #222;">0</div>
<div class="a" style="left:0;top:882.6px;width:117.9px;height:20.8px;overflow:hidden">
<div class="t" id="t81" style="left:13.3px;top:4.6px;font-size:13px;font-weight:400;color:#111;transform:scaleX(1.125);">../../nc_files//feat</div>
</div>
<div class="t" id="t82" style="left:155.0px;top:740.1px;font-size:20px;font-weight:700;color:#111;transform:scaleX(1.206);-webkit-text-stroke:0.44px #111;">Vel.</div>
<div class="t" id="t83" style="left:250.5px;top:740.1px;font-size:20px;font-weight:700;color:#111;transform:scaleX(1.124);-webkit-text-stroke:0.44px #111;">0</div>
<div class="t" id="t84" style="left:253.8px;top:764.8px;font-size:13px;font-weight:400;color:#111;transform:scaleX(1.090);">21600</div>
<div class="a" style="left:135px;top:789px;width:128px;height:5px;background:#c8cac4;border-radius:3px;border:1px solid #b0b2ab"></div>
<div class="a" style="left:135px;top:789px;width:132px;height:5px;background:linear-gradient(#f5a090,#ee6a55 50%,#e25a45);border-radius:3px;border:1px solid #c84a3a"></div>
<div class="a" style="left:263px;top:785px;width:28px;height:13px;background:linear-gradient(#fafafa,#e6e6e3 55%,#cfd1cb);border:1px solid #9a9d95;border-radius:6px"></div>
<svg class="a" style="left:274.0px;top:788px;" width="6" height="7" viewBox="0 0 6 7"><path d="M1.5,0 V7 M4.5,0 V7" stroke="#999" stroke-width="1"/></svg>
<div class="t" id="t85" style="left:143.6px;top:805.2px;font-size:14px;font-weight:700;color:#111;transform:scaleX(1.141);-webkit-text-stroke:0.31px #111;">Feed Override [%]</div>
<div class="t" id="t86" style="left:168.0px;top:837.8px;font-size:20px;font-weight:700;color:#111;transform:scaleX(0.941);-webkit-text-stroke:0.44px #111;">F</div>
<div class="t" id="t87" style="left:195.5px;top:837.8px;font-size:20px;font-weight:700;color:#111;transform:scaleX(1.124);-webkit-text-stroke:0.44px #111;">0</div>
<div class="a" style="left:246px;top:827px;width:46px;height:41px;background:linear-gradient(#86b3aa,#70a096 50%,#5c8b81);border:1px solid #55817a;border-radius:4px;"></div>
<div class="t" id="t88" style="left:250.0px;top:840.1px;font-size:14px;font-weight:400;color:#111;transform:scaleX(1.061);">100%</div>
<div class="t" id="t89" style="left:265.8px;top:868.8px;font-size:13px;font-weight:400;color:#111;transform:scaleX(1.046);">100</div>
<div class="a" style="left:135px;top:893px;width:128px;height:5px;background:#c8cac4;border-radius:3px;border:1px solid #b0b2ab"></div>
<div class="a" style="left:135px;top:893px;width:132px;height:5px;background:linear-gradient(#f5a090,#ee6a55 50%,#e25a45);border-radius:3px;border:1px solid #c84a3a"></div>
<div class="a" style="left:263px;top:889px;width:28px;height:13px;background:linear-gradient(#fafafa,#e6e6e3 55%,#cfd1cb);border:1px solid #9a9d95;border-radius:6px"></div>
<svg class="a" style="left:274.0px;top:892px;" width="6" height="7" viewBox="0 0 6 7"><path d="M1.5,0 V7 M4.5,0 V7" stroke="#999" stroke-width="1"/></svg>
<div class="t" id="t90" style="left:309.8px;top:744.9px;font-size:21px;font-weight:700;color:#111;transform:scaleX(1.208);-webkit-text-stroke:0.46px #111;">Z</div>
<div class="t" id="t91" style="left:346.3px;top:744.9px;font-size:21px;font-weight:700;color:#111;transform:scaleX(1.269);-webkit-text-stroke:0.46px #111;">0.000</div>
<div class="t" id="t92" style="left:309.3px;top:781.9px;font-size:21px;font-weight:700;color:#111;transform:scaleX(1.060);-webkit-text-stroke:0.46px #111;">Δ</div>
<div class="t" id="t93" style="left:346.3px;top:781.9px;font-size:21px;font-weight:700;color:#111;transform:scaleX(1.269);-webkit-text-stroke:0.46px #111;">0.000</div>
<svg class="a" style="left:314px;top:812px;" width="108" height="26" viewBox="0 0 108 26"><circle cx="12.7" cy="12.7" r="10.8" fill="#006400" stroke="#111" stroke-width="1.3"/><circle cx="54.9" cy="12.7" r="10.8" fill="#6a5a10" stroke="#111" stroke-width="1.3"/><circle cx="94.8" cy="12.7" r="10.8" fill="#f01818" stroke="#111" stroke-width="1.3"/></svg>
<div class="a" style="left:306px;top:848px;width:45px;height:51px;background:linear-gradient(#86b3aa,#70a096 50%,#5c8b81);border:1px solid #55817a;border-radius:4px;"></div>
<div class="a" style="left:357px;top:848px;width:43px;height:51px;background:linear-gradient(#86b3aa,#70a096 50%,#5c8b81);border:1px solid #55817a;border-radius:4px;"></div>
<div class="t" id="t94" style="left:314.0px;top:867.1px;font-size:14px;font-weight:400;color:#111;transform:scaleX(1.101);"><u>P</u>lay</div>
<div class="t" id="t95" style="left:362.0px;top:866.1px;font-size:14px;font-weight:400;color:#111;transform:scaleX(0.993);"><u>O</u>pen</div>
<div class="t" id="t96" style="left:404.2px;top:852.6px;font-size:13px;font-weight:400;color:#111;transform:scaleX(1.017);">G92</div>
<div class="a" style="left:409px;top:880px;width:12px;height:12px;background:#fff;border:1px solid #888;border-radius:2px"></div>
<div class="t" id="t97" style="left:444.0px;top:812.0px;font-size:13px;font-weight:400;color:#a8aaa4;transform:scaleX(1.059);">0.00</div>
<div class="a" style="left:480px;top:737px;width:5px;height:70px;background:#cfd1cb;border:1px solid #b4b6af;border-radius:3px"></div>
<div class="a" style="left:480px;top:830px;width:5px;height:71px;background:linear-gradient(90deg,#e25a45,#f5a090 50%,#e25a45);border:1px solid #c84a3a;border-radius:3px"></div>
<div class="a" style="left:475px;top:806px;width:13px;height:26px;background:linear-gradient(90deg,#fafafa,#e6e6e3 55%,#cfd1cb);border:1px solid #9a9d95;border-radius:6px"></div>
<svg class="a" style="left:478px;top:815px;" width="7" height="6" viewBox="0 0 7 6"><path d="M0,1.5 H7 M0,4.5 H7" stroke="#999"/></svg>
<div class="a" style="left:513px;top:758px;width:54px;height:54px;background:linear-gradient(#90bcb3,#6a9a90);border:1px solid #5e8a80;border-radius:3px"></div>
<div class="a" style="left:518px;top:762px;width:46px;height:45px;background:#e0e0de;border:1px solid #b8b8b4"></div>
<div class="a" style="left:513px;top:824px;width:54px;height:54px;background:linear-gradient(#90bcb3,#6a9a90);border:1px solid #5e8a80;border-radius:3px"></div>
<div class="a" style="left:518px;top:828px;width:46px;height:45px;background:#e0e0de;border:1px solid #b8b8b4"></div>
<svg class="a" style="left:518px;top:762px;" width="46" height="45" viewBox="0 0 46 45"><path d="M21.5,5.8 H28.5" stroke="#111" stroke-width="2.6"/><path d="M25,6 V12" stroke="#111" stroke-width="1.6"/><rect x="10" y="14" width="13.4" height="4.8" fill="#c4c4c4" stroke="#10c010" stroke-width="1"/><rect x="22" y="11" width="5.3" height="9" fill="#9a9a9a" stroke="#10c010" stroke-width="1"/><path d="M27.3,13.8 H33 Q36.5,13.8 37,17.5 V21 H31.5 V18.8 H27.3 Z" fill="#c4c4c4" stroke="#10c010" stroke-width="1"/><path d="M15.7,21.9 L25.3,31.5 L15.7,41.1 L6.1,31.5 Z" fill="#f2f064" stroke="#08a008" stroke-width="1.2"/><path d="M15.7,26.5 V36.5" stroke="#111" stroke-width="2.2"/><path d="M31.5,21 L37,21 L37.8,41 L30.2,41 Z" fill="#0a1ae8" stroke="#10c010" stroke-width="1"/></svg>
<svg class="a" style="left:518px;top:828px;" width="46" height="45" viewBox="0 0 46 45"><path d="M21.5,5.8 H28.5" stroke="#111" stroke-width="2.6"/><path d="M25,6 V12" stroke="#111" stroke-width="1.6"/><rect x="10" y="14" width="13.4" height="4.8" fill="#c4c4c4" stroke="#10c010" stroke-width="1"/><rect x="22" y="11" width="5.3" height="9" fill="#9a9a9a" stroke="#10c010" stroke-width="1"/><path d="M27.3,13.8 H33 Q36.5,13.8 37,17.5 V21 H31.5 V18.8 H27.3 Z" fill="#c4c4c4" stroke="#10c010" stroke-width="1"/><path d="M15.7,21.9 L25.3,31.5 L15.7,41.1 L6.1,31.5 Z" fill="#f2f064" stroke="#08a008" stroke-width="1.2"/><path d="M15.7,26.5 V36.5" stroke="#111" stroke-width="2.2"/><path d="M33,21 Q30,24 30,28 Q28,34 31,38 Q34,42 38,40 Q42,38 41.5,31 Q41,24 37,22 Z" fill="#86d8f0" stroke="#10c010" stroke-width="1"/><path d="M32,28 h1 M35,31 h1 M33,35 h1 M38,27 h1 M37,35 h1" stroke="#4aa8d0" stroke-width="0.8"/></svg>
<div class="t" id="t98" style="left:628.0px;top:749.7px;font-size:20px;font-weight:700;color:#111;transform:scaleX(1.189);-webkit-text-stroke:0.44px #111;">S 3500</div>
<div class="a" style="left:736px;top:737px;width:46px;height:46px;background:linear-gradient(#86b3aa,#70a096 50%,#5c8b81);border:1px solid #55817a;border-radius:4px;"></div>
<div class="t" id="t99" style="left:740.0px;top:752.1px;font-size:14px;font-weight:400;color:#111;transform:scaleX(1.061);">100%</div>
<div class="t" id="t100" style="left:710.9px;top:786.2px;font-size:13px;font-weight:400;color:#111;transform:scaleX(1.046);">100</div>
<div class="a" style="left:600px;top:810px;width:181px;height:5px;background:#c8cac4;border-radius:3px;border:1px solid #b0b2ab"></div>
<div class="a" style="left:600px;top:810px;width:114px;height:5px;background:linear-gradient(#f5a090,#ee6a55 50%,#e25a45);border-radius:3px;border:1px solid #c84a3a"></div>
<div class="a" style="left:709px;top:806px;width:26px;height:12px;background:linear-gradient(#fafafa,#e6e6e3 55%,#cfd1cb);border:1px solid #9a9d95;border-radius:6px"></div>
<svg class="a" style="left:719px;top:808px;" width="6" height="7" viewBox="0 0 6 7"><path d="M1.5,0 V7 M4.5,0 V7" stroke="#999" stroke-width="1"/></svg>
<div class="a" style="left:598px;top:823px;width:54px;height:54px;background:linear-gradient(#a4ccc4,#6e9e94);border:1px solid #5e8a80;border-radius:4px"></div>
<div class="a" style="left:662px;top:823px;width:54px;height:54px;background:#f4f400;border:1px solid #d0d000;border-radius:4px"></div>
<div class="a" style="left:726px;top:823px;width:54px;height:54px;background:linear-gradient(#a4ccc4,#6e9e94);border:1px solid #5e8a80;border-radius:4px"></div>
<div class="a" style="left:603px;top:827px;width:44px;height:45px;background:#dcdcda"></div>
<div class="a" style="left:667px;top:827px;width:44px;height:45px;background:#eeee60"></div>
<div class="a" style="left:731px;top:827px;width:44px;height:45px;background:#dcdcda"></div>
<svg class="a" style="left:603px;top:827px;" width="44" height="45" viewBox="0 0 44 45"><rect x="17" y="2" width="12" height="24" fill="#ccc" stroke="#0a0"/><path d="M23,10 v8" stroke="#0d0" stroke-width="1.5"/><rect x="13" y="26" width="20" height="7" fill="#bbb" stroke="#0a0"/><path d="M16,33 h14 l-3,4 h-8 Z" fill="#555"/><path d="M14,28 q-14,4 -6,10 q6,4 18,2 l0,3 l5,-5 l-6,-4 l0,3 q-10,1 -14,-2 q-3,-2 3,-5 Z" fill="#e81818" stroke="#0a0" stroke-width="0.8"/></svg>
<svg class="a" style="left:731px;top:827px;" width="44" height="45" viewBox="0 0 44 45"><rect x="17" y="2" width="12" height="24" fill="#ccc" stroke="#0a0"/><path d="M23,10 v8" stroke="#0d0" stroke-width="1.5"/><rect x="13" y="26" width="20" height="7" fill="#bbb" stroke="#0a0"/><path d="M16,33 h14 l-3,4 h-8 Z" fill="#555"/><path d="M32,28 q14,4 6,10 q-6,4 -18,2 l0,3 l-5,-5 l6,-4 l0,3 q10,1 14,-2 q3,-2 -3,-5 Z" fill="#e81818" stroke="#0a0" stroke-width="0.8"/></svg>
<svg class="a" style="left:667px;top:827px;" width="44" height="45" viewBox="0 0 44 45"><path d="M15,1 h14" stroke="#222" stroke-width="2"/><rect x="17" y="2" width="12" height="24" fill="#ccc" stroke="#333"/><text x="19" y="20" font-size="11" fill="#e01010" font-family="Liberation Sans">0</text><rect x="13" y="26" width="20" height="7" fill="#bbb" stroke="#e01010"/><path d="M16,33 h14 l-7,12 Z" fill="#555" stroke="#111"/><path d="M19,36 h8 l-4,6 Z" fill="#eed"/></svg>
<div class="a" style="left:597px;top:879px;width:157px;height:24px;background:#c0c0bc;border:1px solid #666"></div>
<div class="t" id="t101" style="left:602.0px;top:885.3px;font-size:12px;font-weight:400;color:#111;">0</div>
<div class="t" id="t102" style="left:674.0px;top:885.3px;font-size:12px;font-weight:400;color:#111;">0</div>
<div class="t" id="t103" style="left:717.5px;top:885.3px;font-size:12px;font-weight:400;color:#111;transform:scaleX(0.929);">24000</div>
<svg class="a" style="left:756px;top:879px;" width="24" height="24" viewBox="0 0 24 24"><circle cx="12" cy="11.6" r="10.5" fill="#00e000" stroke="#111" stroke-width="1.4"/></svg>
<div class="a" style="left:792px;top:716px;width:9px;height:190px;background:linear-gradient(90deg,#d0d2cc,#f2f3f0 50%,#d0d2cc);border:1px solid #b8bab3;border-radius:5px"></div>
<svg class="a" style="left:0;top:0" width="450" height="710" viewBox="0 0 450 710">
<g stroke="#111" fill="none" stroke-width="1.6">
<path d="M22.5,672.5 V687.5 M20.5,672.5 H24.5 M20.5,687.5 H24.5"/>
<path d="M14.4,687.8 L21.6,692.3 M25.2,692.3 L41,683"/>
<path d="M64.5,671.5 V688 M62.5,671.5 H66.5 M62.5,688 H66.5 M66.5,691 H84.5 M66.5,689 V693 M84.5,689 V693"/>
<path d="M111.5,671.5 V688 M109.5,671.5 H113.5 M109.5,688 H113.5 M113.7,691 H131.8 M113.7,689 V693 M131.8,689 V693"/>
<path d="M157.5,671.5 V688 M155.5,671.5 H159.5 M155.5,688 H159.5 M159.5,691 H177.7 M159.5,689 V693 M177.7,689 V693"/>
</g>
<path d="M20.5,692 l3,0 l-1.5,-2.5 Z M40,682 l2.5,-1 l-0.5,3 Z" fill="#111"/>
<text x="25" y="687" font-family="Liberation Serif" font-weight="bold" font-size="18" fill="#111" textLength="11.5" lengthAdjust="spacingAndGlyphs">P</text>
<text x="69" y="686.5" font-family="Liberation Serif" font-weight="bold" font-size="17.5" fill="#111" textLength="13.5" lengthAdjust="spacingAndGlyphs">X</text>
<text x="116.5" y="686.5" font-family="Liberation Serif" font-weight="bold" font-size="17.5" fill="#111" textLength="12.5" lengthAdjust="spacingAndGlyphs">Y</text>
<text x="162.5" y="686.5" font-family="Liberation Serif" font-weight="bold" font-size="17.5" fill="#111" textLength="12" lengthAdjust="spacingAndGlyphs">Z</text>
<defs><radialGradient id="lens" cx="0.4" cy="0.35" r="0.7"><stop offset="0" stop-color="#ffffff"/><stop offset="0.6" stop-color="#c8e4f8"/><stop offset="1" stop-color="#7ab0d8"/></radialGradient></defs>
<path d="M240.4,687.6 L248.1,695.2" stroke="#a04a10" stroke-width="5.5" stroke-linecap="round"/><path d="M240.4,687.6 L248.1,695.2" stroke="#f0902a" stroke-width="3.5" stroke-linecap="round"/>
<circle cx="230.9" cy="678" r="9.4" fill="url(#lens)" stroke="#888" stroke-width="2"/>
<path d="M224,686.5 h3 v-3 h4 v3 h3 v4 h-3 v3 h-4 v-3 h-3 Z" fill="#28a028" stroke="#e8f8e8" stroke-width="1"/>
<path d="M287.4,687.6 L295,695.2" stroke="#a04a10" stroke-width="5.5" stroke-linecap="round"/><path d="M287.4,687.6 L295,695.2" stroke="#f0902a" stroke-width="3.5" stroke-linecap="round"/>
<circle cx="277.8" cy="678" r="9.4" fill="url(#lens)" stroke="#888" stroke-width="2"/>
<rect x="269.5" y="691.5" width="13.5" height="5" fill="#28a028" stroke="#e8f8e8" stroke-width="1"/>
<path d="M317,688 A12,12 0 0 1 333,679" fill="none" stroke="#e8a020" stroke-width="3.5" opacity="0.85"/>
<path d="M321,688 A8,8 0 0 1 332,683" fill="none" stroke="#f0c040" stroke-width="1.5" opacity="0.8"/>
<path d="M315.8,686.8 L333,689 L332.5,693 L316,691.5 Z" fill="#e8a028" stroke="#c07010" stroke-width="0.6" opacity="0.9"/>
<path d="M318,689 l2,1 M322,689.5 l2,1 M326,690 l2,1" stroke="#d05010" stroke-width="0.8"/>
<rect x="338.3" y="692.5" width="2.4" height="5" fill="#e09020"/>
<path d="M323.5,668.5 Q330,666.5 341,670.5 L341.5,672.5 L337,672.5 L337,674 L341.5,675 L340,677 Q331,674.5 323.5,673.5 L327,672 Z" fill="#c4ccd4" stroke="#5a6a7a" stroke-width="0.7"/>
<path d="M332.5,674 L338.5,674 L338.5,699 L333,699 Z" fill="#9aa8b4" stroke="#4a5a6a" stroke-width="0.7"/>
<path d="M334,676 V697" stroke="#dde4ea" stroke-width="1"/>
<ellipse cx="340.2" cy="682" rx="2.4" ry="2.6" fill="#b8c2ca" stroke="#5a6a7a" stroke-width="0.6"/>
<path d="M366.5,691.5 L383,674.5 L387,678.5 L370.5,695.5 Z" fill="#f0a020" stroke="#8a4a10" stroke-width="0.8"/>
<path d="M366.5,691.5 L365,697 L370.5,695.5 Z" fill="#f8e0c0" stroke="#8a4a10" stroke-width="0.8"/>
<path d="M383,674.5 L386,671.5 L390,675.5 L387,678.5 Z" fill="#e03030" stroke="#8a1a10" stroke-width="0.6"/>
<path d="M411,667.5 L416.5,677" stroke="#a06020" stroke-width="2.5"/>
<path d="M411,677 L420,675 L422,680 L413,682 Z" fill="#c02020"/>
<path d="M413,681 L422,679 L434,693 L424,697 L418,695 Z" fill="#f0c030" stroke="#a07010" stroke-width="0.8"/>
<path d="M417,683 L424,696 M420,682 L429,695" stroke="#c89010" stroke-width="0.8"/>
</svg>
<svg class="a" style="left:702px;top:705px;" width="16" height="24" viewBox="0 0 16 24"><path d="M1,1 L1,19 L5.5,15 L8.5,22 L11.5,20.5 L8.5,14 L14,14 Z" fill="#111" stroke="#fff" stroke-width="1.2"/></svg>
</body></html>
